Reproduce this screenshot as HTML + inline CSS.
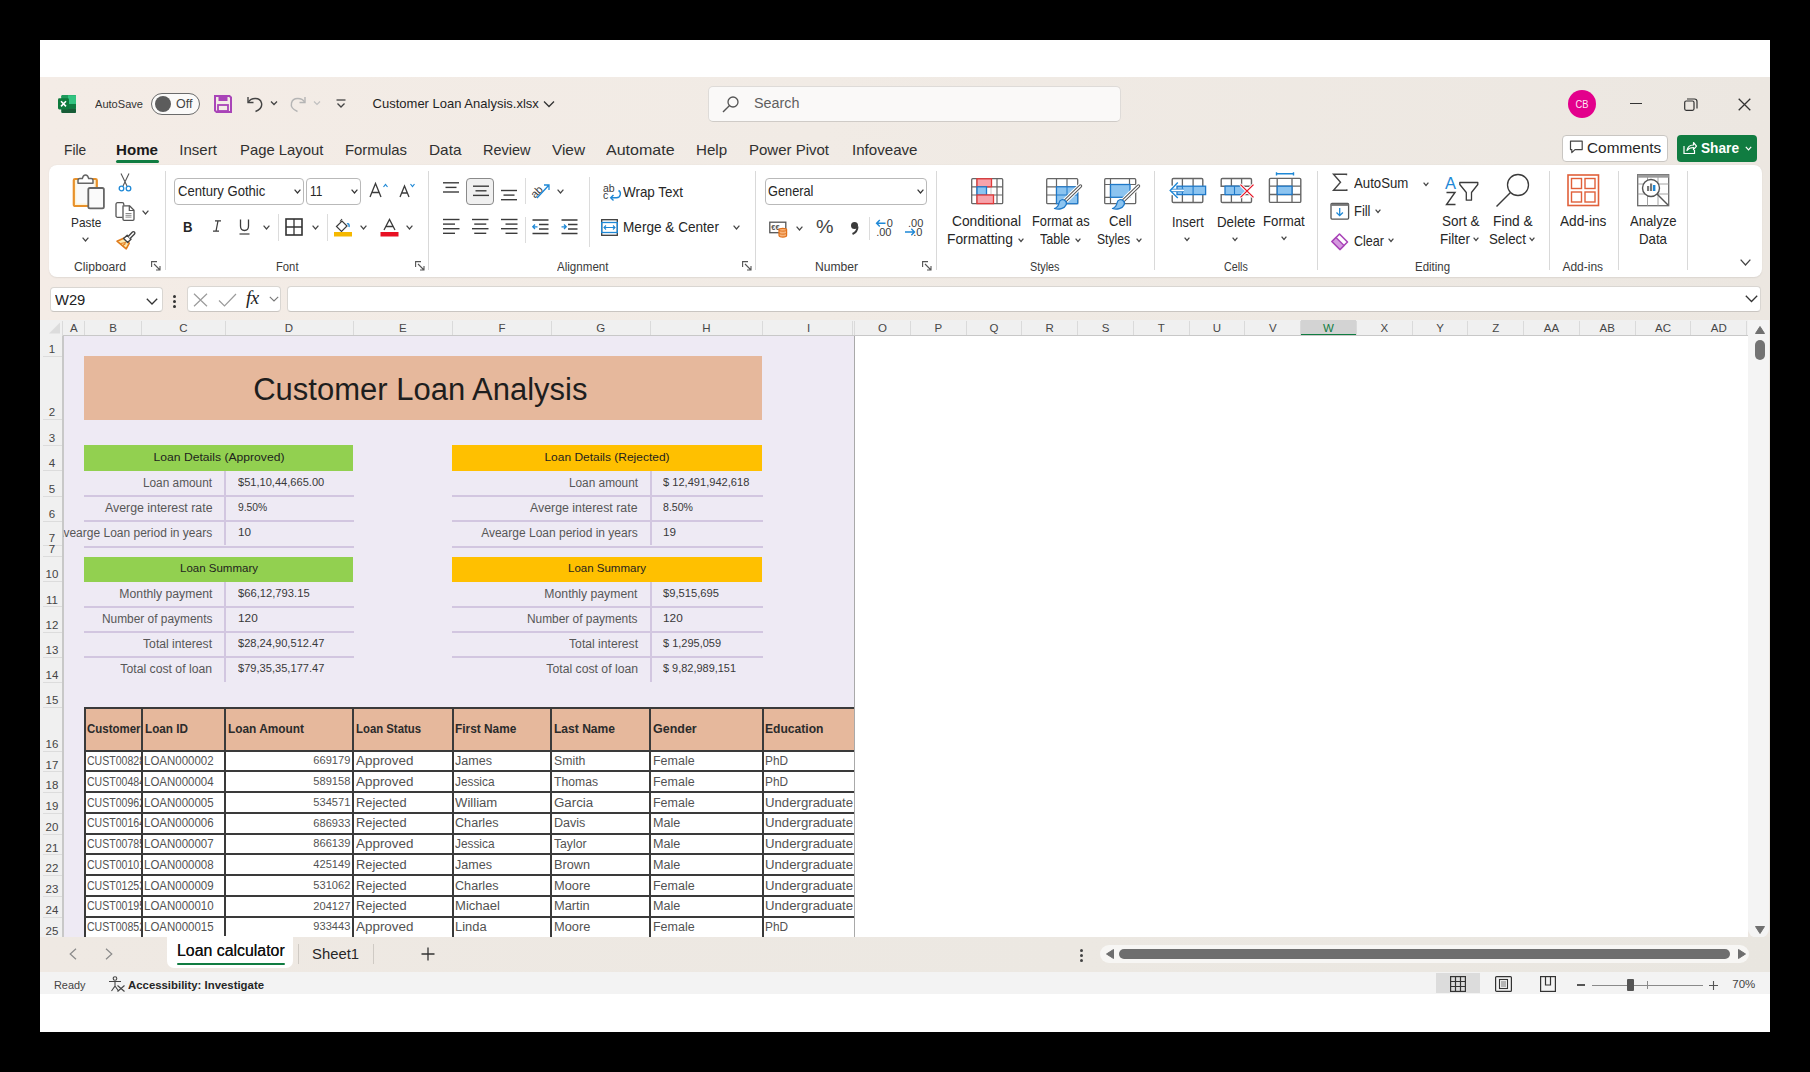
<!DOCTYPE html><html><head><meta charset='utf-8'><title>Excel</title><style>
*{margin:0;padding:0;box-sizing:border-box}
html,body{width:1810px;height:1072px;overflow:hidden;background:#000;font-family:"Liberation Sans",sans-serif}
.a{position:absolute}
.t{position:absolute;white-space:nowrap;line-height:1;font-family:"Liberation Sans",sans-serif}
svg{overflow:visible}
</style></head><body><div class="a" style="left:40.00px;top:40.00px;width:1730.00px;height:992.00px;background:#ffffff;"></div>
<div class="a" style="left:40px;top:77px;width:1730px;height:895px;background:linear-gradient(90deg,#f4ece6 0%,#f1ebe5 45%,#ece7e1 100%)"></div>
<svg class="a" style="left:58px;top:94.8px;" width="19" height="18.2" viewBox="0 0 19 18.2">
      <rect x="3.4" y="0" width="14.6" height="18" rx="1.3" fill="#21a366"/>
      <rect x="3.4" y="0" width="14.6" height="4.5" rx="1.3" fill="#1f9a5c"/>
      <rect x="10" y="0.3" width="8" height="8.7" fill="#33c481"/>
      <rect x="3.4" y="9" width="14.6" height="4.5" fill="#107c41"/>
      <rect x="3.4" y="13.5" width="14.6" height="4.5" rx="1.3" fill="#185c37"/>
      <rect x="0" y="3.2" width="11" height="11.2" rx="1.3" fill="#0e7a3c"/>
      <path d="M3 6.3 L8 11.4 M8 6.3 L3 11.4" stroke="#fff" stroke-width="1.6"/>
    </svg>
<div class="t" style="top:98.65px;font-size:11.50px;color:#333;left:95.00px;transform:scaleX(0.9626);transform-origin:left top;">AutoSave</div>
<div class="a" style="left:150.50px;top:92.50px;width:49.50px;height:22.00px;border:1.3px solid #6b6b6b;border-radius:11px;background:#fbfaf9"></div>
<div class="a" style="left:155px;top:95.5px;width:16px;height:16px;border-radius:50%;background:#5c5c5c"></div>
<div class="t" style="top:97.59px;font-size:12.00px;color:#444;left:176.00px;transform:scaleX(1.0390);transform-origin:left top;">Off</div>
<svg class="a" style="left:214px;top:95px;" width="18" height="18" viewBox="0 0 18 18">
      <path d="M1 1 H15.5 L17 2.5 V17 H2.5 L1 15.5 Z" fill="none" stroke="#a944b8" stroke-width="2"/>
      <rect x="4.5" y="1" width="9" height="5" fill="#a944b8"/>
      <rect x="4" y="10" width="10" height="6" fill="none" stroke="#a944b8" stroke-width="1.8"/>
    </svg>
<svg class="a" style="left:246px;top:94px;" width="18" height="18" viewBox="0 0 18 18"><path d="M2 3 V8.5 H7.5" fill="none" stroke="#444" stroke-width="1.4"/>
      <path d="M2.5 8 C5 3.5 14 3 15.5 9 C16.5 13 13 16 9.5 17.5" fill="none" stroke="#444" stroke-width="1.4"/></svg>
<svg class="a" style="left:270px;top:100px;" width="8" height="6" viewBox="0 0 8 6"><path d="M1 1.5 L4 4.5 L7 1.5" fill="none" stroke="#444" stroke-width="1.3"/></svg>
<svg class="a" style="left:289px;top:94px;" width="18" height="18" viewBox="0 0 18 18"><path d="M16 3 V8.5 H10.5" fill="none" stroke="#b5b5b5" stroke-width="1.4"/>
      <path d="M15.5 8 C13 3.5 4 3 2.5 9 C1.5 13 5 16 8.5 17.5" fill="none" stroke="#b5b5b5" stroke-width="1.4"/></svg>
<svg class="a" style="left:313px;top:100px;" width="8" height="6" viewBox="0 0 8 6"><path d="M1 1.5 L4 4.5 L7 1.5" fill="none" stroke="#c0c0c0" stroke-width="1.2"/></svg>
<svg class="a" style="left:336px;top:99px;" width="10" height="10" viewBox="0 0 10 10"><path d="M0.5 1 H9.5" stroke="#444" stroke-width="1.3"/><path d="M1.5 4.5 L5 8 L8.5 4.5" fill="none" stroke="#444" stroke-width="1.3"/></svg>
<div class="t" style="top:97.47px;font-size:13.00px;color:#1f1f1f;left:372.60px;">Customer Loan Analysis.xlsx</div>
<svg class="a" style="left:543px;top:100px;" width="12" height="8" viewBox="0 0 12 8"><path d="M1 1.5 L6 6.5 L11 1.5" fill="none" stroke="#333" stroke-width="1.3"/></svg>
<div class="a" style="left:707.50px;top:86.00px;width:413.50px;height:35.80px;background:#faf9f8;border:1px solid #dedbd8;border-bottom-color:#cfcbc7;border-radius:5px"></div>
<svg class="a" style="left:722px;top:96px;" width="17" height="17" viewBox="0 0 17 17"><circle cx="11" cy="6" r="5" fill="none" stroke="#555" stroke-width="1.3"/><path d="M7.3 9.8 L1 16" stroke="#555" stroke-width="1.4"/></svg>
<div class="t" style="top:95.86px;font-size:14.00px;color:#5f5f5f;left:753.80px;transform:scaleX(1.0258);transform-origin:left top;">Search</div>
<div class="a" style="left:1567.5px;top:89.5px;width:28px;height:28px;border-radius:50%;background:#e3008c"></div>
<div class="t" style="top:99.21px;font-size:11.00px;color:#ffe6f4;left:1181.50px;width:800px;text-align:center;transform:scaleX(0.8507);transform-origin:center top;">CB</div>
<div class="a" style="left:1629.60px;top:102.60px;width:12.20px;height:1.20px;background:#333;"></div>
<svg class="a" style="left:1683.5px;top:97.5px;" width="14" height="13" viewBox="0 0 14 13"><rect x="0.7" y="3" width="9.3" height="9.3" rx="1.5" fill="none" stroke="#333" stroke-width="1.2"/><path d="M3 1 H10.5 C12 1 13 2 13 3.5 V10.5" fill="none" stroke="#333" stroke-width="1.2"/></svg>
<svg class="a" style="left:1737.5px;top:98px;" width="13" height="13" viewBox="0 0 13 13"><path d="M0.7 0.7 L12.3 12.3 M12.3 0.7 L0.7 12.3" stroke="#333" stroke-width="1.3"/></svg>
<div class="t" style="top:141.74px;font-size:15.00px;color:#303030;left:64.40px;transform:scaleX(0.9144);transform-origin:left top;">File</div>
<div class="t" style="top:141.74px;font-size:15.00px;color:#1a1a1a;font-weight:700;left:116.00px;transform:scaleX(1.0078);transform-origin:left top;">Home</div>
<div class="t" style="top:141.74px;font-size:15.00px;color:#303030;left:179.30px;">Insert</div>
<div class="t" style="top:141.74px;font-size:15.00px;color:#303030;left:239.60px;transform:scaleX(0.9901);transform-origin:left top;">Page Layout</div>
<div class="t" style="top:141.74px;font-size:15.00px;color:#303030;left:345.00px;transform:scaleX(0.9919);transform-origin:left top;">Formulas</div>
<div class="t" style="top:141.74px;font-size:15.00px;color:#303030;left:428.50px;transform:scaleX(1.0258);transform-origin:left top;">Data</div>
<div class="t" style="top:141.74px;font-size:15.00px;color:#303030;left:482.50px;transform:scaleX(0.9658);transform-origin:left top;">Review</div>
<div class="t" style="top:141.74px;font-size:15.00px;color:#303030;left:552.00px;transform:scaleX(1.0236);transform-origin:left top;">View</div>
<div class="t" style="top:141.74px;font-size:15.00px;color:#303030;left:606.00px;transform:scaleX(1.0685);transform-origin:left top;">Automate</div>
<div class="t" style="top:141.74px;font-size:15.00px;color:#303030;left:695.50px;transform:scaleX(1.0082);transform-origin:left top;">Help</div>
<div class="t" style="top:141.74px;font-size:15.00px;color:#303030;left:749.00px;">Power Pivot</div>
<div class="t" style="top:141.74px;font-size:15.00px;color:#303030;left:852.00px;transform:scaleX(1.0071);transform-origin:left top;">Infoveave</div>
<div class="a" style="left:116.00px;top:159.80px;width:42.50px;height:2.80px;background:#107c41;border-radius:2px"></div>
<div class="a" style="left:1562.40px;top:134.50px;width:105.40px;height:27.10px;background:#ffffff;border:1px solid #c9c6c2;border-radius:4px"></div>
<svg class="a" style="left:1569px;top:140px;" width="15" height="14" viewBox="0 0 15 14"><path d="M1.5 1.2 H13.2 V9.6 H6 L2.8 12.6 V9.6 H1.5 Z" fill="none" stroke="#444" stroke-width="1.2" stroke-linejoin="round"/></svg>
<div class="t" style="top:139.74px;font-size:15.00px;color:#262626;left:1586.70px;transform:scaleX(1.0246);transform-origin:left top;">Comments</div>
<div class="a" style="left:1677.20px;top:134.50px;width:80.20px;height:27.10px;background:#107c41;border-radius:4px"></div>
<svg class="a" style="left:1682px;top:140px;" width="15" height="15" viewBox="0 0 15 15"><path d="M2 6 V13.5 H12.5 V10" fill="none" stroke="#fff" stroke-width="1.2"/><path d="M5 10.5 C5.5 7 8 5 11.5 5 V2.5 L14.5 6.2 L11.5 9.7 V7.5 C9 7.5 6.5 8.5 5 10.5 Z" fill="none" stroke="#fff" stroke-width="1.2" stroke-linejoin="round"/></svg>
<div class="t" style="top:139.74px;font-size:15.00px;color:#ffffff;font-weight:700;left:1700.50px;transform:scaleX(0.9115);transform-origin:left top;">Share</div>
<svg class="a" style="left:1745px;top:146px;" width="7" height="5" viewBox="0 0 7 5"><path d="M0.8 0.8 L3.5 3.8 L6.2 0.8" fill="none" stroke="#fff" stroke-width="1.2"/></svg>
<div class="a" style="left:48.70px;top:165.00px;width:1713.30px;height:112.00px;background:#ffffff;border-radius:8px;box-shadow:0 0.5px 1.5px rgba(0,0,0,0.08)"></div>
<div class="a" style="left:164.60px;top:171.00px;width:1.00px;height:99.00px;background:#d9d9d9;"></div>
<div class="a" style="left:427.60px;top:171.00px;width:1.00px;height:99.00px;background:#d9d9d9;"></div>
<div class="a" style="left:754.60px;top:171.00px;width:1.00px;height:99.00px;background:#d9d9d9;"></div>
<div class="a" style="left:935.70px;top:171.00px;width:1.00px;height:99.00px;background:#d9d9d9;"></div>
<div class="a" style="left:1154.40px;top:171.00px;width:1.00px;height:99.00px;background:#d9d9d9;"></div>
<div class="a" style="left:1316.50px;top:171.00px;width:1.00px;height:99.00px;background:#d9d9d9;"></div>
<div class="a" style="left:1548.50px;top:171.00px;width:1.00px;height:99.00px;background:#d9d9d9;"></div>
<div class="a" style="left:1618.00px;top:171.00px;width:1.00px;height:99.00px;background:#d9d9d9;"></div>
<div class="a" style="left:1687.40px;top:171.00px;width:1.00px;height:99.00px;background:#d9d9d9;"></div>
<svg class="a" style="left:72px;top:174px;" width="34" height="36" viewBox="0 0 34 36">
      <rect x="1.8" y="5" width="23" height="27" rx="1.3" fill="#fef3d6" stroke="#e8912a" stroke-width="2.2"/>
      <rect x="4.3" y="8" width="17.8" height="21.5" fill="#fafafa"/>
      <path d="M6 9.3 V6.5 C6 5.3 6.8 4.6 8 4.6 H10.3 C10.8 2.2 11.9 0.9 13.5 0.9 C15.1 0.9 16.2 2.2 16.7 4.6 H19 C20.2 4.6 21 5.3 21 6.5 V9.3 Z" fill="#fff" stroke="#666" stroke-width="1.5" stroke-linejoin="round"/>
      <rect x="16.3" y="14" width="15.6" height="20.4" rx="1.6" fill="#fafafa" stroke="#666" stroke-width="1.8"/>
    </svg>
<div class="t" style="top:215.97px;font-size:13.00px;color:#2b2b2b;left:71.00px;transform:scaleX(0.9115);transform-origin:left top;">Paste</div>
<svg class="a" style="left:82px;top:237px;" width="7" height="5" viewBox="0 0 7 5"><path d="M0.6 0.6 L3.5 4 L6.4 0.6" fill="none" stroke="#444" stroke-width="1.2"/></svg>
<svg class="a" style="left:118px;top:173px;" width="14" height="19" viewBox="0 0 14 19"><path d="M3 0.5 L9 13 M11 0.5 L5 13" stroke="#555" stroke-width="1.1"/>
      <circle cx="3.5" cy="15.5" r="2.3" fill="none" stroke="#1e88d6" stroke-width="1.3"/><circle cx="10.5" cy="15.5" r="2.3" fill="none" stroke="#1e88d6" stroke-width="1.3"/></svg>
<svg class="a" style="left:115px;top:202px;" width="20" height="19" viewBox="0 0 20 19"><path d="M7.5 15.3 H2.6 C1.6 15.3 1 14.7 1 13.7 V2.3 C1 1.3 1.6 0.7 2.6 0.7 H7.2 C8.2 0.7 8.8 1.3 8.8 2.3 V3.5" fill="none" stroke="#555" stroke-width="1.3"/>
      <path d="M8 3.8 H14.5 L19 8.3 V17.2 C19 17.9 18.5 18.3 17.9 18.3 H9.1 C8.4 18.3 8 17.9 8 17.2 Z" fill="#fff" stroke="#555" stroke-width="1.3" stroke-linejoin="round"/>
      <path d="M14.3 3.8 V8.5 H19" fill="none" stroke="#555" stroke-width="1.2"/><path d="M10.5 11.5 H16.5 M10.5 13.3 H16.5 M10.5 15.1 H16.5" stroke="#8a8a8a" stroke-width="1"/></svg>
<svg class="a" style="left:142.4px;top:209.5px;" width="7" height="5" viewBox="0 0 7 5"><path d="M0.6 0.6 L3.5 4 L6.4 0.6" fill="none" stroke="#444" stroke-width="1.2"/></svg>
<svg class="a" style="left:116px;top:230px;" width="19" height="19" viewBox="0 0 19 19"><path d="M1 11.2 L8.2 8 L13.3 13.2 L10.2 18.8 Z" fill="#fde9b0" stroke="#e07b1a" stroke-width="1.6" stroke-linejoin="round"/>
      <path d="M4.5 13.5 L10 12.5 M6.5 15.8 L9.5 13.5" stroke="#e07b1a" stroke-width="1.1"/>
      <path d="M7.6 8.6 L11.2 5.3 L15 9.3 L11.6 12.6 Z" fill="#fff" stroke="#444" stroke-width="1.4" stroke-linejoin="round"/>
      <path d="M12.2 6.4 L16.2 2.2 C16.9 1.5 17.8 1.5 18.4 2.1 C19 2.7 19 3.6 18.3 4.3 L14.1 8.4" fill="#fff" stroke="#444" stroke-width="1.4" stroke-linejoin="round"/></svg>
<div class="t" style="top:260.59px;font-size:12.00px;color:#3a3a3a;left:73.60px;transform:scaleX(1.0125);transform-origin:left top;">Clipboard</div>
<svg class="a" style="left:151px;top:261px;" width="10" height="10" viewBox="0 0 10 10"><path d="M0.6 6 V0.6 H6" fill="none" stroke="#555" stroke-width="1.1"/><path d="M3 3 L9 9 M5 9 H9 V5" fill="none" stroke="#555" stroke-width="1.1"/></svg>
<div class="a" style="left:174.20px;top:177.70px;width:129.40px;height:27.30px;background:#fff;border:1px solid #b9b9b9;border-radius:4px"></div>
<div class="t" style="top:184.33px;font-size:14.20px;color:#262626;left:177.50px;transform:scaleX(0.9229);transform-origin:left top;">Century Gothic</div>
<svg class="a" style="left:294px;top:189px;" width="7" height="5" viewBox="0 0 7 5"><path d="M0.6 0.6 L3.5 4 L6.4 0.6" fill="none" stroke="#333" stroke-width="1.2"/></svg>
<div class="a" style="left:306.20px;top:177.70px;width:55.20px;height:27.30px;background:#fff;border:1px solid #b9b9b9;border-radius:4px"></div>
<div class="t" style="top:184.33px;font-size:14.20px;color:#262626;left:309.50px;transform:scaleX(0.8413);transform-origin:left top;">11</div>
<svg class="a" style="left:350.5px;top:189px;" width="7" height="5" viewBox="0 0 7 5"><path d="M0.6 0.6 L3.5 4 L6.4 0.6" fill="none" stroke="#333" stroke-width="1.2"/></svg>
<svg class="a" style="left:369px;top:182px;" width="19" height="16" viewBox="0 0 19 16"><path d="M1 15 L6.5 1.5 L12 15 M3 10.5 H10" fill="none" stroke="#3b3b3b" stroke-width="1.3"/><path d="M14.5 5 L16.5 2.5 L18.5 5" fill="none" stroke="#1e88d6" stroke-width="1.2"/></svg>
<svg class="a" style="left:399px;top:183px;" width="17" height="15" viewBox="0 0 17 15"><path d="M1 14 L5.5 3 L10 14 M2.7 10 H8.3" fill="none" stroke="#3b3b3b" stroke-width="1.3"/><path d="M11.5 1 L13.5 3.5 L15.5 1" fill="none" stroke="#1e88d6" stroke-width="1.2"/></svg>
<div class="t" style="top:218.74px;font-size:15.00px;color:#262626;font-weight:700;left:183.00px;transform:scaleX(0.8770);transform-origin:left top;">B</div>
<svg class="a" style="left:212px;top:220px;" width="10" height="12" viewBox="0 0 10 12"><path d="M3 0.8 H9 M1 11.2 H7 M6 0.8 L4 11.2" fill="none" stroke="#3b3b3b" stroke-width="1.2"/></svg>
<svg class="a" style="left:239px;top:219px;" width="11" height="16" viewBox="0 0 11 16"><path d="M1.5 0.5 V7 C1.5 13 9.5 13 9.5 7 V0.5" fill="none" stroke="#3b3b3b" stroke-width="1.3"/><path d="M0.5 15 H10.5" stroke="#3b3b3b" stroke-width="1.2"/></svg>
<svg class="a" style="left:263px;top:225px;" width="7" height="5" viewBox="0 0 7 5"><path d="M0.6 0.6 L3.5 4 L6.4 0.6" fill="none" stroke="#444" stroke-width="1.2"/></svg>
<div class="a" style="left:278.00px;top:214.00px;width:1.00px;height:27.00px;background:#dcdcdc;"></div>
<svg class="a" style="left:285px;top:218px;" width="18" height="18" viewBox="0 0 18 18"><rect x="1" y="1" width="16" height="16" fill="none" stroke="#333" stroke-width="1.6"/><path d="M9 1 V17 M1 9 H17" stroke="#333" stroke-width="1.3"/></svg>
<svg class="a" style="left:312px;top:225px;" width="7" height="5" viewBox="0 0 7 5"><path d="M0.6 0.6 L3.5 4 L6.4 0.6" fill="none" stroke="#444" stroke-width="1.2"/></svg>
<div class="a" style="left:327.00px;top:214.00px;width:1.00px;height:27.00px;background:#dcdcdc;"></div>
<svg class="a" style="left:334px;top:218px;" width="19" height="19" viewBox="0 0 19 19"><path d="M2.5 8.5 L8 3 L13 8 L7.5 13.5 Z" fill="none" stroke="#3b3b3b" stroke-width="1.2"/><path d="M6 3.5 L8 1" stroke="#3b3b3b" stroke-width="1.1"/><path d="M13 6 C14.5 5 15.5 6.5 15 9" fill="none" stroke="#1e88d6" stroke-width="1.4"/><rect x="0" y="14" width="18" height="4.5" fill="#f5b800"/></svg>
<svg class="a" style="left:360px;top:225px;" width="7" height="5" viewBox="0 0 7 5"><path d="M0.6 0.6 L3.5 4 L6.4 0.6" fill="none" stroke="#444" stroke-width="1.2"/></svg>
<svg class="a" style="left:379.5px;top:218px;" width="19" height="19" viewBox="0 0 19 19"><path d="M4 12 L9.5 1.5 L15 12 M6 8.5 H13" fill="none" stroke="#3b3b3b" stroke-width="1.3"/><rect x="0.5" y="14" width="18" height="4.5" fill="#e81123"/></svg>
<svg class="a" style="left:406px;top:225px;" width="7" height="5" viewBox="0 0 7 5"><path d="M0.6 0.6 L3.5 4 L6.4 0.6" fill="none" stroke="#444" stroke-width="1.2"/></svg>
<div class="t" style="top:260.59px;font-size:12.00px;color:#3a3a3a;left:276.00px;transform:scaleX(0.9371);transform-origin:left top;">Font</div>
<svg class="a" style="left:414.5px;top:261px;" width="10" height="10" viewBox="0 0 10 10"><path d="M0.6 6 V0.6 H6" fill="none" stroke="#555" stroke-width="1.1"/><path d="M3 3 L9 9 M5 9 H9 V5" fill="none" stroke="#555" stroke-width="1.1"/></svg>
<svg class="a" style="left:443px;top:0px;" width="17" height="300" viewBox="0 0 17 300"><path d="M0.0 182.8 H16.0" stroke="#3b3b3b" stroke-width="1.4"/><path d="M2.5 187.4 H13.5" stroke="#3b3b3b" stroke-width="1.4"/><path d="M0.0 192.0 H16.0" stroke="#3b3b3b" stroke-width="1.4"/></svg>
<div class="a" style="left:466.30px;top:177.80px;width:27.30px;height:27.00px;background:#f0f0f0;border:1px solid #8a8a8a;border-radius:4px"></div>
<svg class="a" style="left:472.5px;top:0px;" width="17" height="300" viewBox="0 0 17 300"><path d="M0.0 186.2 H16.0" stroke="#3b3b3b" stroke-width="1.4"/><path d="M2.5 190.79999999999998 H13.5" stroke="#3b3b3b" stroke-width="1.4"/><path d="M0.0 195.39999999999998 H16.0" stroke="#3b3b3b" stroke-width="1.4"/></svg>
<svg class="a" style="left:501px;top:0px;" width="17" height="300" viewBox="0 0 17 300"><path d="M0.0 190.5 H16.0" stroke="#3b3b3b" stroke-width="1.4"/><path d="M2.5 195.1 H13.5" stroke="#3b3b3b" stroke-width="1.4"/><path d="M0.0 199.7 H16.0" stroke="#3b3b3b" stroke-width="1.4"/></svg>
<div class="a" style="left:524.50px;top:178.00px;width:1.00px;height:26.00px;background:#dcdcdc;"></div>
<svg class="a" style="left:531px;top:182px;" width="20" height="18" viewBox="0 0 20 18"><text x="-1" y="13" font-size="11" fill="#3b3b3b" transform="rotate(-45 6 9)" font-family="Liberation Sans">ab</text><path d="M6 16 L18 3 M13 3 H18 V8" fill="none" stroke="#1e88d6" stroke-width="1.3"/></svg>
<svg class="a" style="left:556.5px;top:189px;" width="7" height="5" viewBox="0 0 7 5"><path d="M0.6 0.6 L3.5 4 L6.4 0.6" fill="none" stroke="#444" stroke-width="1.2"/></svg>
<svg class="a" style="left:443px;top:0px;" width="17" height="300" viewBox="0 0 17 300"><path d="M0 219.5 H16.5" stroke="#3b3b3b" stroke-width="1.4"/><path d="M0 224.1 H12" stroke="#3b3b3b" stroke-width="1.4"/><path d="M0 228.7 H16.5" stroke="#3b3b3b" stroke-width="1.4"/><path d="M0 233.3 H12" stroke="#3b3b3b" stroke-width="1.4"/></svg>
<svg class="a" style="left:472px;top:0px;" width="17" height="300" viewBox="0 0 17 300"><path d="M0.0 219.5 H16.5" stroke="#3b3b3b" stroke-width="1.4"/><path d="M2.25 224.1 H14.25" stroke="#3b3b3b" stroke-width="1.4"/><path d="M0.0 228.7 H16.5" stroke="#3b3b3b" stroke-width="1.4"/><path d="M2.25 233.3 H14.25" stroke="#3b3b3b" stroke-width="1.4"/></svg>
<svg class="a" style="left:501px;top:0px;" width="17" height="300" viewBox="0 0 17 300"><path d="M0.0 219.5 H16.5" stroke="#3b3b3b" stroke-width="1.4"/><path d="M4.5 224.1 H16.5" stroke="#3b3b3b" stroke-width="1.4"/><path d="M0.0 228.7 H16.5" stroke="#3b3b3b" stroke-width="1.4"/><path d="M4.5 233.3 H16.5" stroke="#3b3b3b" stroke-width="1.4"/></svg>
<div class="a" style="left:524.50px;top:217.00px;width:1.00px;height:26.00px;background:#dcdcdc;"></div>
<svg class="a" style="left:532px;top:219px;" width="17" height="17" viewBox="0 0 17 17"><path d="M0.5 1 H16.5 M7 5.5 H16.5 M7 10 H16.5 M0.5 14.5 H16.5" stroke="#3b3b3b" stroke-width="1.4"/><path d="M5.5 7.8 H0.8 M3 5.5 L0.8 7.8 L3 10" fill="none" stroke="#1e88d6" stroke-width="1.3"/></svg>
<svg class="a" style="left:561px;top:219px;" width="17" height="17" viewBox="0 0 17 17"><path d="M0.5 1 H16.5 M7 5.5 H16.5 M7 10 H16.5 M0.5 14.5 H16.5" stroke="#3b3b3b" stroke-width="1.4"/><path d="M0.5 7.8 H5.2 M3 5.5 L5.2 7.8 L3 10" fill="none" stroke="#1e88d6" stroke-width="1.3"/></svg>
<div class="a" style="left:589.30px;top:177.00px;width:1.00px;height:70.00px;background:#dcdcdc;"></div>
<svg class="a" style="left:602px;top:182px;" width="20" height="18" viewBox="0 0 20 18"><text x="1" y="9.6" font-size="10.5" fill="#3b3b3b" font-family="Liberation Sans">ab</text><text x="1" y="16.8" font-size="10.5" fill="#3b3b3b" font-family="Liberation Sans">c</text><path d="M16.5 8.5 C19.5 10 19 15.5 14.5 15.8 H9" fill="none" stroke="#1e88d6" stroke-width="1.4"/><path d="M11.5 13 L8.7 15.8 L11.5 18.5" fill="none" stroke="#1e88d6" stroke-width="1.4"/></svg>
<div class="t" style="top:184.83px;font-size:14.20px;color:#262626;left:623.00px;transform:scaleX(0.9464);transform-origin:left top;">Wrap Text</div>
<svg class="a" style="left:600.5px;top:218.5px;" width="17" height="17" viewBox="0 0 17 17"><rect x="0.7" y="0.7" width="15.6" height="15.6" fill="none" stroke="#3b3b3b" stroke-width="1.3"/><path d="M0.7 3.5 H16.3 M0.7 13.5 H16.3" stroke="#3b3b3b" stroke-width="1"/><rect x="0.7" y="3.5" width="15.6" height="10" fill="none" stroke="#1e88d6" stroke-width="1.3"/><path d="M3 8.5 H14 M5 6.5 L3 8.5 L5 10.5 M12 6.5 L14 8.5 L12 10.5" fill="none" stroke="#1e88d6" stroke-width="1.1"/></svg>
<div class="t" style="top:220.33px;font-size:14.20px;color:#262626;left:623.00px;transform:scaleX(0.9578);transform-origin:left top;">Merge &amp; Center</div>
<svg class="a" style="left:733px;top:225px;" width="7" height="5" viewBox="0 0 7 5"><path d="M0.6 0.6 L3.5 4 L6.4 0.6" fill="none" stroke="#444" stroke-width="1.2"/></svg>
<div class="t" style="top:260.59px;font-size:12.00px;color:#3a3a3a;left:556.50px;transform:scaleX(0.9652);transform-origin:left top;">Alignment</div>
<svg class="a" style="left:742.4px;top:261px;" width="10" height="10" viewBox="0 0 10 10"><path d="M0.6 6 V0.6 H6" fill="none" stroke="#555" stroke-width="1.1"/><path d="M3 3 L9 9 M5 9 H9 V5" fill="none" stroke="#555" stroke-width="1.1"/></svg>
<div class="a" style="left:764.70px;top:177.50px;width:162.00px;height:27.80px;background:#fff;border:1px solid #b9b9b9;border-radius:4px"></div>
<div class="t" style="top:184.33px;font-size:14.20px;color:#262626;left:768.00px;transform:scaleX(0.9007);transform-origin:left top;">General</div>
<svg class="a" style="left:917px;top:189px;" width="7" height="5" viewBox="0 0 7 5"><path d="M0.6 0.6 L3.5 4 L6.4 0.6" fill="none" stroke="#333" stroke-width="1.2"/></svg>
<svg class="a" style="left:769px;top:221px;" width="19" height="17" viewBox="0 0 19 17"><rect x="0.8" y="1.2" width="16" height="10.5" fill="#fff" stroke="#555" stroke-width="1.3"/><text x="2.3" y="9.3" font-size="7.5" fill="#555" font-family="Liberation Sans" font-weight="700">€€</text><path d="M10 8.8 C10 7 17.6 7 17.6 8.8 V14.6 C17.6 16.6 10 16.6 10 14.6 Z" fill="#f7b37a" stroke="#e0701a" stroke-width="1.2"/><path d="M10 8.8 C10 10.6 17.6 10.6 17.6 8.8 M10 11.8 C10 13.6 17.6 13.6 17.6 11.8" fill="none" stroke="#e0701a" stroke-width="1"/></svg>
<svg class="a" style="left:796.4px;top:226px;" width="7" height="5" viewBox="0 0 7 5"><path d="M0.6 0.6 L3.5 4 L6.4 0.6" fill="none" stroke="#444" stroke-width="1.2"/></svg>
<div class="t" style="top:217.27px;font-size:19.00px;color:#444;left:815.50px;transform:scaleX(1.0358);transform-origin:left top;">%</div>
<div class="t" style="top:217.99px;font-size:0.10px;color:#333;left:849.00px;">❟</div>
<svg class="a" style="left:849.7px;top:220px;" width="9" height="15" viewBox="0 0 9 15"><circle cx="4.5" cy="5.5" r="3.5" fill="#3b3b3b"/><path d="M7.5 6.5 C7.5 10 6 12.5 2.5 14" fill="none" stroke="#3b3b3b" stroke-width="2"/></svg>
<div class="a" style="left:869.00px;top:217.00px;width:1.00px;height:23.00px;background:#dcdcdc;"></div>
<svg class="a" style="left:875px;top:218px;" width="20" height="19" viewBox="0 0 20 19"><path d="M1.6 5.2 H10.5 M4.8 2 L1.6 5.2 L4.8 8.4" fill="none" stroke="#1e88d6" stroke-width="1.4"/><text x="11.8" y="9.2" font-size="11" fill="#3b3b3b" font-family="Liberation Sans">0</text><text x="1.2" y="18.2" font-size="11" fill="#3b3b3b" font-family="Liberation Sans">.00</text></svg>
<svg class="a" style="left:903.5px;top:218px;" width="21" height="19" viewBox="0 0 21 19"><text x="4" y="9.2" font-size="11" fill="#3b3b3b" font-family="Liberation Sans">.00</text><path d="M1 14 H10.5 M7.3 10.8 L10.5 14 L7.3 17.2" fill="none" stroke="#1e88d6" stroke-width="1.4"/><text x="9.3" y="18.2" font-size="11" fill="#3b3b3b" font-family="Liberation Sans">.0</text></svg>
<div class="t" style="top:260.59px;font-size:12.00px;color:#3a3a3a;left:814.50px;transform:scaleX(1.0099);transform-origin:left top;">Number</div>
<svg class="a" style="left:922px;top:261px;" width="10" height="10" viewBox="0 0 10 10"><path d="M0.6 6 V0.6 H6" fill="none" stroke="#555" stroke-width="1.1"/><path d="M3 3 L9 9 M5 9 H9 V5" fill="none" stroke="#555" stroke-width="1.1"/></svg>
<svg class="a" style="left:970.5px;top:177.5px;" width="33" height="27" viewBox="0 0 33 27"><rect x="0.7" y="0.7" width="31" height="25" rx="1" fill="#fff" stroke="#666" stroke-width="1.3"/>
      <path d="M6 0.7 V25.7 M26 0.7 V25.7 M0.7 8.8 H31.7 M0.7 17 H31.7" stroke="#666" stroke-width="1.2"/>
      <path d="M15 9 V17 M20 9 V17" stroke="#c8c8c8" stroke-width="1"/>
      <rect x="6" y="0.8" width="14.5" height="8" fill="#f7a3ab" stroke="#e03a3a" stroke-width="1.3"/>
      <rect x="6" y="8.8" width="9.5" height="8.2" fill="#8cc4f0" stroke="#1e78c8" stroke-width="1.3"/>
      <rect x="6" y="17" width="16.5" height="8.6" fill="#f7a3ab" stroke="#e03a3a" stroke-width="1.3"/></svg>
<div class="t" style="top:213.93px;font-size:14.20px;color:#262626;left:951.60px;transform:scaleX(0.9712);transform-origin:left top;">Conditional</div>
<div class="t" style="top:231.93px;font-size:14.20px;color:#262626;left:947.00px;transform:scaleX(0.9726);transform-origin:left top;">Formatting</div>
<svg class="a" style="left:1018px;top:237.5px;" width="6" height="4.5" viewBox="0 0 6 4.5"><path d="M0.6 0.6 L3.0 3.5 L5.4 0.6" fill="none" stroke="#444" stroke-width="1.2"/></svg>
<svg class="a" style="left:1045.5px;top:177.5px;" width="37" height="32" viewBox="0 0 37 32"><rect x="0.7" y="0.7" width="31" height="25" rx="1" fill="#fff" stroke="#666" stroke-width="1.3"/>
      <path d="M10.5 0.7 V25.7 M21 0.7 V25.7 M0.7 8.8 H31.7 M0.7 17 H31.7" stroke="#666" stroke-width="1.2"/>
      <rect x="10.5" y="8.8" width="21.2" height="16.9" fill="#8cc4f0" stroke="#1e78c8" stroke-width="1.2"/>
      <path d="M21 8.8 V25.7 M10.5 17 H31.7" stroke="#1e78c8" stroke-width="1"/>
      <path d="M34.5 8 L17 25" stroke="#fff" stroke-width="5.5" stroke-linecap="round"/><path d="M34.5 8 L17 25" stroke="#555" stroke-width="3.4" stroke-linecap="round"/><path d="M34.5 8 L17 25" stroke="#fff" stroke-width="1.4" stroke-linecap="round"/>
      <path d="M19.5 23 C17.5 20.5 13.5 21.5 13 25 C12.5 28 11 29.5 8.5 30.5 C13 32 18.5 30.5 20 27 C20.8 25.5 20.5 24 19.5 23 Z" fill="#8cc4f0" stroke="#1e78c8" stroke-width="1.3" stroke-linejoin="round"/></svg>
<div class="t" style="top:213.93px;font-size:14.20px;color:#262626;left:1032.00px;transform:scaleX(0.9028);transform-origin:left top;">Format as</div>
<div class="t" style="top:231.93px;font-size:14.20px;color:#262626;left:1040.00px;transform:scaleX(0.8838);transform-origin:left top;">Table</div>
<svg class="a" style="left:1075px;top:237.5px;" width="6" height="4.5" viewBox="0 0 6 4.5"><path d="M0.6 0.6 L3.0 3.5 L5.4 0.6" fill="none" stroke="#444" stroke-width="1.2"/></svg>
<svg class="a" style="left:1104px;top:177.5px;" width="37" height="32" viewBox="0 0 37 32"><rect x="0.7" y="0.7" width="31" height="25" rx="1" fill="#fff" stroke="#666" stroke-width="1.3"/>
      <path d="M6.5 0.7 V25.7 M0.7 6.5 H6.5 M0.7 19.3 H6.5 M25.5 0.7 V6.5 H31.7" fill="none" stroke="#666" stroke-width="1.2"/>
      <rect x="6.5" y="6.5" width="19.5" height="12.8" fill="#8cc4f0" stroke="#1e78c8" stroke-width="1.3"/>
      <path d="M34.5 8 L17 25" stroke="#fff" stroke-width="5.5" stroke-linecap="round"/><path d="M34.5 8 L17 25" stroke="#555" stroke-width="3.4" stroke-linecap="round"/><path d="M34.5 8 L17 25" stroke="#fff" stroke-width="1.4" stroke-linecap="round"/>
      <path d="M19.5 23 C17.5 20.5 13.5 21.5 13 25 C12.5 28 11 29.5 8.5 30.5 C13 32 18.5 30.5 20 27 C20.8 25.5 20.5 24 19.5 23 Z" fill="#8cc4f0" stroke="#1e78c8" stroke-width="1.3" stroke-linejoin="round"/></svg>
<div class="t" style="top:213.93px;font-size:14.20px;color:#262626;left:1109.00px;transform:scaleX(0.9239);transform-origin:left top;">Cell</div>
<div class="t" style="top:231.93px;font-size:14.20px;color:#262626;left:1096.50px;transform:scaleX(0.8534);transform-origin:left top;">Styles</div>
<svg class="a" style="left:1136px;top:237.5px;" width="6" height="4.5" viewBox="0 0 6 4.5"><path d="M0.6 0.6 L3.0 3.5 L5.4 0.6" fill="none" stroke="#444" stroke-width="1.2"/></svg>
<div class="t" style="top:260.59px;font-size:12.00px;color:#3a3a3a;left:1029.70px;transform:scaleX(0.9028);transform-origin:left top;">Styles</div>
<svg class="a" style="left:1169px;top:176px;" width="40" height="30" viewBox="0 0 40 30"><rect x="3.2" y="2.5" width="30.6" height="24" rx="1.2" fill="#fff" stroke="#666" stroke-width="1.4"/>
      <path d="M13.4 2.5 V26.5 M24.1 2.5 V26.5" stroke="#666" stroke-width="1.3"/>
      <rect x="0" y="9.6" width="6" height="9.6" fill="#fff"/>
      <rect x="8" y="10.2" width="28.6" height="8.4" fill="#8cc4f0" stroke="#1e78c8" stroke-width="1.3"/>
      <path d="M24.1 10.2 V18.6 M13.4 10.2 V18.6" stroke="#1e78c8" stroke-width="1.1"/>
      <path d="M1.5 14.4 H15" stroke="#fff" stroke-width="3"/><path d="M2 13.2 H15 M2 15.6 H15" stroke="#1e78c8" stroke-width="0.8"/>
      <path d="M8.8 6.5 L1.2 14.4 L8.8 22" fill="none" stroke="#1e88d6" stroke-width="1.4"/></svg>
<div class="t" style="top:214.63px;font-size:14.20px;color:#262626;left:1171.50px;transform:scaleX(0.8927);transform-origin:left top;">Insert</div>
<svg class="a" style="left:1184px;top:236.5px;" width="6" height="4.5" viewBox="0 0 6 4.5"><path d="M0.6 0.6 L3.0 3.5 L5.4 0.6" fill="none" stroke="#444" stroke-width="1.2"/></svg>
<svg class="a" style="left:1218px;top:176px;" width="40" height="30" viewBox="0 0 40 30"><path d="M3.2 10.2 V3.7 C3.2 3 3.7 2.5 4.4 2.5 H32.3 C33 2.5 33.5 3 33.5 3.7 V10.2 Z" fill="#fff" stroke="#666" stroke-width="1.4"/>
      <path d="M3.2 18.6 V25.3 C3.2 26 3.7 26.5 4.4 26.5 H32.3 C33 26.5 33.5 26 33.5 25.3 V18.6 Z" fill="#fff" stroke="#666" stroke-width="1.4"/>
      <path d="M13.4 2.5 V10.2 M23.6 2.5 V10.2 M13.4 18.6 V26.5 M23.6 18.6 V26.5" stroke="#666" stroke-width="1.3"/>
      <path d="M7 10.2 H24.5 L28.5 14.4 L24.5 18.6 H7 Z" fill="#8cc4f0" stroke="#1e78c8" stroke-width="1.3" stroke-linejoin="round"/>
      <path d="M16.5 10.2 V18.6" stroke="#1e78c8" stroke-width="1.1"/>
      <path d="M22.5 8.6 L35.5 21.4 M35.5 8.6 L22.5 21.4" stroke="#fff" stroke-width="3"/>
      <path d="M22.5 8.6 L35.5 21.4 M35.5 8.6 L22.5 21.4" stroke="#e81123" stroke-width="1.3"/></svg>
<div class="t" style="top:214.63px;font-size:14.20px;color:#262626;left:1216.80px;transform:scaleX(0.9380);transform-origin:left top;">Delete</div>
<svg class="a" style="left:1232px;top:236.5px;" width="6" height="4.5" viewBox="0 0 6 4.5"><path d="M0.6 0.6 L3.0 3.5 L5.4 0.6" fill="none" stroke="#444" stroke-width="1.2"/></svg>
<svg class="a" style="left:1267px;top:172px;" width="37" height="33" viewBox="0 0 37 33"><rect x="2.4" y="6.4" width="31.4" height="24" rx="1.2" fill="#fff" stroke="#666" stroke-width="1.4"/>
      <path d="M10.2 6.4 V30.4 M25 6.4 V30.4 M2.4 14.2 H33.8 M2.4 22.5 H33.8" stroke="#666" stroke-width="1.3"/>
      <rect x="10.2" y="14.2" width="14.8" height="8.3" fill="#8cc4f0" stroke="#1e78c8" stroke-width="1.3"/>
      <path d="M9.5 1.8 H26.5 M9.5 0.2 V3.4 M26.5 0.2 V3.4" stroke="#1e88d6" stroke-width="1.4"/></svg>
<div class="t" style="top:213.93px;font-size:14.20px;color:#262626;left:1263.20px;transform:scaleX(0.9296);transform-origin:left top;">Format</div>
<svg class="a" style="left:1281px;top:235.5px;" width="6" height="4.5" viewBox="0 0 6 4.5"><path d="M0.6 0.6 L3.0 3.5 L5.4 0.6" fill="none" stroke="#444" stroke-width="1.2"/></svg>
<div class="t" style="top:260.59px;font-size:12.00px;color:#3a3a3a;left:1223.60px;transform:scaleX(0.8923);transform-origin:left top;">Cells</div>
<svg class="a" style="left:1332px;top:173px;" width="17" height="19" viewBox="0 0 17 19"><path d="M14.5 2.2 V1.3 H1.5 L8.5 9.2 L1.5 17.2 H14.8 V16.3" fill="none" stroke="#444" stroke-width="1.4" stroke-linejoin="miter"/></svg>
<div class="t" style="top:175.83px;font-size:14.20px;color:#262626;left:1353.80px;transform:scaleX(0.9314);transform-origin:left top;">AutoSum</div>
<svg class="a" style="left:1423px;top:181.5px;" width="6" height="4.5" viewBox="0 0 6 4.5"><path d="M0.6 0.6 L3.0 3.5 L5.4 0.6" fill="none" stroke="#444" stroke-width="1.2"/></svg>
<svg class="a" style="left:1330px;top:202px;" width="20" height="18" viewBox="0 0 20 18"><rect x="1" y="1.3" width="17.6" height="15.8" rx="1" fill="#fff" stroke="#555" stroke-width="1.3"/><path d="M1 2.8 H18.6" stroke="#777" stroke-width="2.2"/><path d="M9.7 6 V13.5 M6.5 10.5 L9.7 13.7 L12.9 10.5" fill="none" stroke="#1e88d6" stroke-width="1.3"/></svg>
<div class="t" style="top:204.33px;font-size:14.20px;color:#262626;left:1353.80px;transform:scaleX(0.9097);transform-origin:left top;">Fill</div>
<svg class="a" style="left:1375px;top:208.5px;" width="6" height="4.5" viewBox="0 0 6 4.5"><path d="M0.6 0.6 L3.0 3.5 L5.4 0.6" fill="none" stroke="#444" stroke-width="1.2"/></svg>
<svg class="a" style="left:1331px;top:231px;" width="18" height="18" viewBox="0 0 18 18"><path d="M1 10.5 L8.5 3 L16.5 11 L9 18.5 Z" fill="#fff" stroke="#a944b8" stroke-width="1.6" stroke-linejoin="round"/><path d="M1 10.5 L5 6.5 L13 14.5 L9 18.5 Z" fill="#d59adf" stroke="#a944b8" stroke-width="1.4" stroke-linejoin="round"/></svg>
<div class="t" style="top:233.83px;font-size:14.20px;color:#262626;left:1353.80px;transform:scaleX(0.8841);transform-origin:left top;">Clear</div>
<svg class="a" style="left:1388px;top:238px;" width="6" height="4.5" viewBox="0 0 6 4.5"><path d="M0.6 0.6 L3.0 3.5 L5.4 0.6" fill="none" stroke="#444" stroke-width="1.2"/></svg>
<svg class="a" style="left:1445px;top:175px;" width="35" height="31" viewBox="0 0 35 31"><text x="0" y="14" font-size="16.5" fill="#1e88d6" font-family="Liberation Sans">A</text><path d="M1.5 17.5 H10 L1.5 29.5 H10.5" fill="none" stroke="#3b3b3b" stroke-width="1.4"/><path d="M14.8 7.5 H32.8 V9.5 L26.5 17.5 V25.2 H21.3 V17.5 L14.8 9.5 Z" fill="none" stroke="#3b3b3b" stroke-width="1.3" stroke-linejoin="round"/></svg>
<div class="t" style="top:213.93px;font-size:14.20px;color:#262626;left:1442.00px;transform:scaleX(0.9529);transform-origin:left top;">Sort &amp;</div>
<div class="t" style="top:231.93px;font-size:14.20px;color:#262626;left:1440.00px;transform:scaleX(0.9508);transform-origin:left top;">Filter</div>
<svg class="a" style="left:1473px;top:236.5px;" width="6" height="4.5" viewBox="0 0 6 4.5"><path d="M0.6 0.6 L3.0 3.5 L5.4 0.6" fill="none" stroke="#444" stroke-width="1.2"/></svg>
<svg class="a" style="left:1495px;top:173px;" width="35" height="35" viewBox="0 0 35 35"><circle cx="23" cy="12" r="10.5" fill="none" stroke="#3b3b3b" stroke-width="1.3"/><path d="M15.5 19.5 L1.5 33.5" stroke="#3b3b3b" stroke-width="1.4"/></svg>
<div class="t" style="top:213.93px;font-size:14.20px;color:#262626;left:1493.00px;transform:scaleX(0.9698);transform-origin:left top;">Find &amp;</div>
<div class="t" style="top:231.93px;font-size:14.20px;color:#262626;left:1488.60px;transform:scaleX(0.9375);transform-origin:left top;">Select</div>
<svg class="a" style="left:1529px;top:236.5px;" width="6" height="4.5" viewBox="0 0 6 4.5"><path d="M0.6 0.6 L3.0 3.5 L5.4 0.6" fill="none" stroke="#444" stroke-width="1.2"/></svg>
<div class="t" style="top:260.59px;font-size:12.00px;color:#3a3a3a;left:1415.00px;transform:scaleX(0.9539);transform-origin:left top;">Editing</div>
<svg class="a" style="left:1567px;top:174px;" width="33" height="33" viewBox="0 0 33 33"><rect x="1" y="1" width="30.5" height="30.5" fill="none" stroke="#e0603a" stroke-width="1.6"/><rect x="4.5" y="4.5" width="10" height="10" fill="none" stroke="#e0603a" stroke-width="1.4"/><rect x="18" y="4.5" width="10" height="10" fill="none" stroke="#e0603a" stroke-width="1.4"/><rect x="4.5" y="18" width="10" height="10" fill="none" stroke="#e0603a" stroke-width="1.4"/><rect x="18" y="18" width="10" height="10" fill="none" stroke="#e0603a" stroke-width="1.4"/></svg>
<div class="t" style="top:213.83px;font-size:14.20px;color:#262626;left:1560.20px;transform:scaleX(0.9638);transform-origin:left top;">Add-ins</div>
<div class="t" style="top:260.59px;font-size:12.00px;color:#3a3a3a;left:1562.40px;">Add-ins</div>
<svg class="a" style="left:1636.5px;top:174px;" width="33" height="33" viewBox="0 0 33 33"><rect x="0.7" y="0.7" width="31" height="31" fill="#fff" stroke="#6a6a6a" stroke-width="1.3"/><rect x="0.7" y="0.7" width="31" height="3" fill="#9a9a9a"/>
      <path d="M0.7 10 H31.7 M0.7 20 H31.7 M10.5 3 V31.7 M21 3 V31.7" stroke="#9a9a9a" stroke-width="0.9"/>
      <circle cx="14" cy="14" r="8.5" fill="#fff" stroke="#555" stroke-width="1.4"/><path d="M20 20 L31 31" stroke="#555" stroke-width="1.4"/>
      <rect x="10" y="12" width="2.2" height="5" fill="#777"/><rect x="13" y="9.5" width="2.2" height="7.5" fill="#777"/><rect x="16" y="11" width="2.4" height="6" fill="#1e88d6"/></svg>
<div class="t" style="top:213.83px;font-size:14.20px;color:#262626;left:1629.60px;transform:scaleX(0.9225);transform-origin:left top;">Analyze</div>
<div class="t" style="top:231.93px;font-size:14.20px;color:#262626;left:1639.00px;transform:scaleX(0.9335);transform-origin:left top;">Data</div>
<svg class="a" style="left:1740px;top:259px;" width="11" height="7" viewBox="0 0 11 7"><path d="M0.65 0.65 L5.5 6 L10.35 0.65" fill="none" stroke="#444" stroke-width="1.3"/></svg>
<div class="a" style="left:50.00px;top:286.50px;width:113.00px;height:25.50px;background:#fff;border:1px solid #d9d6d2;border-bottom-color:#c9c5c1;border-radius:4px"></div>
<div class="t" style="top:292.86px;font-size:14.00px;color:#222;left:55.00px;transform:scaleX(1.0526);transform-origin:left top;">W29</div>
<svg class="a" style="left:145.5px;top:297.5px;" width="12" height="7" viewBox="0 0 12 7"><path d="M0.8 0.8 L6 6 L11.2 0.8" fill="none" stroke="#333" stroke-width="1.3"/></svg>
<div class="a" style="left:173.2px;top:294.5px;width:3px;height:3px;border-radius:50%;background:#333"></div>
<div class="a" style="left:173.2px;top:299.5px;width:3px;height:3px;border-radius:50%;background:#333"></div>
<div class="a" style="left:173.2px;top:304.5px;width:3px;height:3px;border-radius:50%;background:#333"></div>
<div class="a" style="left:187.00px;top:286.00px;width:94.00px;height:26.00px;background:#fff;border:1px solid #d9d6d2;border-bottom-color:#c9c5c1;border-radius:4px"></div>
<svg class="a" style="left:193px;top:293px;" width="15" height="14" viewBox="0 0 15 14"><path d="M1 0.8 L14 13.2 M14 0.8 L1 13.2" stroke="#9b9b9b" stroke-width="1.2"/></svg>
<svg class="a" style="left:218px;top:293px;" width="19" height="14" viewBox="0 0 19 14"><path d="M1 7.5 L6.5 13 L18 1" fill="none" stroke="#9b9b9b" stroke-width="1.2"/></svg>
<div class="t" style="left:246px;top:288px;font-family:'Liberation Serif',serif;font-style:italic;font-size:19px;color:#222;letter-spacing:-0.5px">fx</div>
<svg class="a" style="left:269px;top:296px;" width="10" height="6" viewBox="0 0 10 6"><path d="M0.8 0.8 L5 5 L9.2 0.8" fill="none" stroke="#777" stroke-width="1.1"/></svg>
<div class="a" style="left:287.00px;top:286.00px;width:1474.00px;height:26.00px;background:#fff;border:1px solid #d9d6d2;border-bottom-color:#c9c5c1;border-radius:4px"></div>
<svg class="a" style="left:1744.5px;top:295px;" width="13" height="8" viewBox="0 0 13 8"><path d="M0.8 0.8 L6.5 6.5 L12.2 0.8" fill="none" stroke="#333" stroke-width="1.3"/></svg>
<div class="a" style="left:40.00px;top:320.00px;width:1708.00px;height:617.00px;background:#ffffff;"></div>
<div class="a" style="left:40.00px;top:320.00px;width:1708.00px;height:16.00px;background:#f0f0f0;"></div>
<div class="a" style="left:40.00px;top:320.00px;width:23.00px;height:617.00px;background:#f0f0f0;"></div>
<svg class="a" style="left:48px;top:322px;" width="13" height="12" viewBox="0 0 13 12"><path d="M12 0.5 V11.5 H1 Z" fill="#dcdcdc"/></svg>
<div class="t" style="top:323.15px;font-size:11.50px;color:#474747;left:-326.25px;width:800px;text-align:center;">A</div>
<div class="a" style="left:84.00px;top:321.00px;width:1.00px;height:14.00px;background:#dadada;"></div>
<div class="t" style="top:323.15px;font-size:11.50px;color:#474747;left:-286.85px;width:800px;text-align:center;">B</div>
<div class="a" style="left:141.30px;top:321.00px;width:1.00px;height:14.00px;background:#dadada;"></div>
<div class="t" style="top:323.15px;font-size:11.50px;color:#474747;left:-216.60px;width:800px;text-align:center;">C</div>
<div class="a" style="left:224.50px;top:321.00px;width:1.00px;height:14.00px;background:#dadada;"></div>
<div class="t" style="top:323.15px;font-size:11.50px;color:#474747;left:-111.00px;width:800px;text-align:center;">D</div>
<div class="a" style="left:352.50px;top:321.00px;width:1.00px;height:14.00px;background:#dadada;"></div>
<div class="t" style="top:323.15px;font-size:11.50px;color:#474747;left:2.75px;width:800px;text-align:center;">E</div>
<div class="a" style="left:452.00px;top:321.00px;width:1.00px;height:14.00px;background:#dadada;"></div>
<div class="t" style="top:323.15px;font-size:11.50px;color:#474747;left:101.90px;width:800px;text-align:center;">F</div>
<div class="a" style="left:550.80px;top:321.00px;width:1.00px;height:14.00px;background:#dadada;"></div>
<div class="t" style="top:323.15px;font-size:11.50px;color:#474747;left:200.85px;width:800px;text-align:center;">G</div>
<div class="a" style="left:649.90px;top:321.00px;width:1.00px;height:14.00px;background:#dadada;"></div>
<div class="t" style="top:323.15px;font-size:11.50px;color:#474747;left:306.50px;width:800px;text-align:center;">H</div>
<div class="a" style="left:762.10px;top:321.00px;width:1.00px;height:14.00px;background:#dadada;"></div>
<div class="t" style="top:323.15px;font-size:11.50px;color:#474747;left:408.60px;width:800px;text-align:center;">I</div>
<div class="a" style="left:854.10px;top:321.00px;width:1.00px;height:14.00px;background:#dadada;"></div>
<div class="t" style="top:323.15px;font-size:11.50px;color:#474747;left:482.48px;width:800px;text-align:center;">O</div>
<div class="a" style="left:909.85px;top:321.00px;width:1.00px;height:14.00px;background:#dadada;"></div>
<div class="t" style="top:323.15px;font-size:11.50px;color:#474747;left:538.23px;width:800px;text-align:center;">P</div>
<div class="a" style="left:965.60px;top:321.00px;width:1.00px;height:14.00px;background:#dadada;"></div>
<div class="t" style="top:323.15px;font-size:11.50px;color:#474747;left:593.98px;width:800px;text-align:center;">Q</div>
<div class="a" style="left:1021.35px;top:321.00px;width:1.00px;height:14.00px;background:#dadada;"></div>
<div class="t" style="top:323.15px;font-size:11.50px;color:#474747;left:649.72px;width:800px;text-align:center;">R</div>
<div class="a" style="left:1077.10px;top:321.00px;width:1.00px;height:14.00px;background:#dadada;"></div>
<div class="t" style="top:323.15px;font-size:11.50px;color:#474747;left:705.47px;width:800px;text-align:center;">S</div>
<div class="a" style="left:1132.85px;top:321.00px;width:1.00px;height:14.00px;background:#dadada;"></div>
<div class="t" style="top:323.15px;font-size:11.50px;color:#474747;left:761.22px;width:800px;text-align:center;">T</div>
<div class="a" style="left:1188.60px;top:321.00px;width:1.00px;height:14.00px;background:#dadada;"></div>
<div class="t" style="top:323.15px;font-size:11.50px;color:#474747;left:816.97px;width:800px;text-align:center;">U</div>
<div class="a" style="left:1244.35px;top:321.00px;width:1.00px;height:14.00px;background:#dadada;"></div>
<div class="t" style="top:323.15px;font-size:11.50px;color:#474747;left:872.72px;width:800px;text-align:center;">V</div>
<div class="a" style="left:1300.10px;top:321.00px;width:1.00px;height:14.00px;background:#dadada;"></div>
<div class="a" style="left:1300.60px;top:320.00px;width:55.75px;height:16.00px;background:#d3d3d3;"></div>
<div class="a" style="left:1300.60px;top:334.00px;width:55.75px;height:2.00px;background:#107c41;"></div>
<div class="t" style="top:323.15px;font-size:11.50px;color:#107c41;left:928.47px;width:800px;text-align:center;">W</div>
<div class="a" style="left:1355.85px;top:321.00px;width:1.00px;height:14.00px;background:#dadada;"></div>
<div class="t" style="top:323.15px;font-size:11.50px;color:#474747;left:984.22px;width:800px;text-align:center;">X</div>
<div class="a" style="left:1411.60px;top:321.00px;width:1.00px;height:14.00px;background:#dadada;"></div>
<div class="t" style="top:323.15px;font-size:11.50px;color:#474747;left:1039.97px;width:800px;text-align:center;">Y</div>
<div class="a" style="left:1467.35px;top:321.00px;width:1.00px;height:14.00px;background:#dadada;"></div>
<div class="t" style="top:323.15px;font-size:11.50px;color:#474747;left:1095.72px;width:800px;text-align:center;">Z</div>
<div class="a" style="left:1523.10px;top:321.00px;width:1.00px;height:14.00px;background:#dadada;"></div>
<div class="t" style="top:323.15px;font-size:11.50px;color:#474747;left:1151.47px;width:800px;text-align:center;">AA</div>
<div class="a" style="left:1578.85px;top:321.00px;width:1.00px;height:14.00px;background:#dadada;"></div>
<div class="t" style="top:323.15px;font-size:11.50px;color:#474747;left:1207.22px;width:800px;text-align:center;">AB</div>
<div class="a" style="left:1634.60px;top:321.00px;width:1.00px;height:14.00px;background:#dadada;"></div>
<div class="t" style="top:323.15px;font-size:11.50px;color:#474747;left:1262.97px;width:800px;text-align:center;">AC</div>
<div class="a" style="left:1690.35px;top:321.00px;width:1.00px;height:14.00px;background:#dadada;"></div>
<div class="t" style="top:323.15px;font-size:11.50px;color:#474747;left:1318.72px;width:800px;text-align:center;">AD</div>
<div class="a" style="left:1746.10px;top:321.00px;width:1.00px;height:14.00px;background:#dadada;"></div>
<div class="a" style="left:852.10px;top:321.00px;width:1.00px;height:14.00px;background:#dadada;"></div>
<div class="a" style="left:63.00px;top:334.60px;width:1685.00px;height:1.60px;background:#c8c8c8;"></div>
<div class="a" style="left:40px;top:336.00px;width:23px;height:20.00px;overflow:hidden"><div class="t" style="left:0;width:24px;text-align:center;top:7.80px;font-size:11.5px;color:#444">1</div></div>
<div class="a" style="left:43.00px;top:355.50px;width:19.00px;height:1.00px;background:#dcdcdc;"></div>
<div class="a" style="left:40px;top:356.00px;width:23px;height:63.50px;overflow:hidden"><div class="t" style="left:0;width:24px;text-align:center;top:51.30px;font-size:11.5px;color:#444">2</div></div>
<div class="a" style="left:43.00px;top:419.00px;width:19.00px;height:1.00px;background:#dcdcdc;"></div>
<div class="a" style="left:40px;top:419.50px;width:23px;height:25.50px;overflow:hidden"><div class="t" style="left:0;width:24px;text-align:center;top:13.30px;font-size:11.5px;color:#444">3</div></div>
<div class="a" style="left:43.00px;top:444.50px;width:19.00px;height:1.00px;background:#dcdcdc;"></div>
<div class="a" style="left:40px;top:445.00px;width:23px;height:25.50px;overflow:hidden"><div class="t" style="left:0;width:24px;text-align:center;top:13.30px;font-size:11.5px;color:#444">4</div></div>
<div class="a" style="left:43.00px;top:470.00px;width:19.00px;height:1.00px;background:#dcdcdc;"></div>
<div class="a" style="left:40px;top:470.50px;width:23px;height:25.50px;overflow:hidden"><div class="t" style="left:0;width:24px;text-align:center;top:13.30px;font-size:11.5px;color:#444">5</div></div>
<div class="a" style="left:43.00px;top:495.50px;width:19.00px;height:1.00px;background:#dcdcdc;"></div>
<div class="a" style="left:40px;top:496.00px;width:23px;height:25.20px;overflow:hidden"><div class="t" style="left:0;width:24px;text-align:center;top:13.00px;font-size:11.5px;color:#444">6</div></div>
<div class="a" style="left:43.00px;top:520.70px;width:19.00px;height:1.00px;background:#dcdcdc;"></div>
<div class="a" style="left:40px;top:521.20px;width:23px;height:23.80px;overflow:hidden"><div class="t" style="left:0;width:24px;text-align:center;top:11.60px;font-size:11.5px;color:#444">7</div></div>
<div class="a" style="left:43.00px;top:544.50px;width:19.00px;height:1.00px;background:#dcdcdc;"></div>
<div class="a" style="left:40px;top:545.00px;width:23px;height:11.50px;overflow:hidden"><div class="t" style="left:0;width:24px;text-align:center;top:-0.70px;font-size:11.5px;color:#444">7</div></div>
<div class="a" style="left:43.00px;top:556.00px;width:19.00px;height:1.00px;background:#dcdcdc;"></div>
<div class="a" style="left:40px;top:556.50px;width:23px;height:25.00px;overflow:hidden"><div class="t" style="left:0;width:24px;text-align:center;top:12.80px;font-size:11.5px;color:#444">10</div></div>
<div class="a" style="left:43.00px;top:581.00px;width:19.00px;height:1.00px;background:#dcdcdc;"></div>
<div class="a" style="left:40px;top:581.50px;width:23px;height:25.20px;overflow:hidden"><div class="t" style="left:0;width:24px;text-align:center;top:13.00px;font-size:11.5px;color:#444">11</div></div>
<div class="a" style="left:43.00px;top:606.20px;width:19.00px;height:1.00px;background:#dcdcdc;"></div>
<div class="a" style="left:40px;top:606.70px;width:23px;height:25.30px;overflow:hidden"><div class="t" style="left:0;width:24px;text-align:center;top:13.10px;font-size:11.5px;color:#444">12</div></div>
<div class="a" style="left:43.00px;top:631.50px;width:19.00px;height:1.00px;background:#dcdcdc;"></div>
<div class="a" style="left:40px;top:632.00px;width:23px;height:25.00px;overflow:hidden"><div class="t" style="left:0;width:24px;text-align:center;top:12.80px;font-size:11.5px;color:#444">13</div></div>
<div class="a" style="left:43.00px;top:656.50px;width:19.00px;height:1.00px;background:#dcdcdc;"></div>
<div class="a" style="left:40px;top:657.00px;width:23px;height:25.00px;overflow:hidden"><div class="t" style="left:0;width:24px;text-align:center;top:12.80px;font-size:11.5px;color:#444">14</div></div>
<div class="a" style="left:43.00px;top:681.50px;width:19.00px;height:1.00px;background:#dcdcdc;"></div>
<div class="a" style="left:40px;top:682.00px;width:23px;height:25.50px;overflow:hidden"><div class="t" style="left:0;width:24px;text-align:center;top:13.30px;font-size:11.5px;color:#444">15</div></div>
<div class="a" style="left:43.00px;top:707.00px;width:19.00px;height:1.00px;background:#dcdcdc;"></div>
<div class="a" style="left:40px;top:707.50px;width:23px;height:43.50px;overflow:hidden"><div class="t" style="left:0;width:24px;text-align:center;top:31.30px;font-size:11.5px;color:#444">16</div></div>
<div class="a" style="left:43.00px;top:750.50px;width:19.00px;height:1.00px;background:#dcdcdc;"></div>
<div class="a" style="left:40px;top:751.00px;width:23px;height:20.75px;overflow:hidden"><div class="t" style="left:0;width:24px;text-align:center;top:8.55px;font-size:11.5px;color:#444">17</div></div>
<div class="a" style="left:43.00px;top:771.25px;width:19.00px;height:1.00px;background:#dcdcdc;"></div>
<div class="a" style="left:40px;top:771.75px;width:23px;height:20.75px;overflow:hidden"><div class="t" style="left:0;width:24px;text-align:center;top:8.55px;font-size:11.5px;color:#444">18</div></div>
<div class="a" style="left:43.00px;top:792.00px;width:19.00px;height:1.00px;background:#dcdcdc;"></div>
<div class="a" style="left:40px;top:792.50px;width:23px;height:20.75px;overflow:hidden"><div class="t" style="left:0;width:24px;text-align:center;top:8.55px;font-size:11.5px;color:#444">19</div></div>
<div class="a" style="left:43.00px;top:812.75px;width:19.00px;height:1.00px;background:#dcdcdc;"></div>
<div class="a" style="left:40px;top:813.25px;width:23px;height:20.75px;overflow:hidden"><div class="t" style="left:0;width:24px;text-align:center;top:8.55px;font-size:11.5px;color:#444">20</div></div>
<div class="a" style="left:43.00px;top:833.50px;width:19.00px;height:1.00px;background:#dcdcdc;"></div>
<div class="a" style="left:40px;top:834.00px;width:23px;height:20.75px;overflow:hidden"><div class="t" style="left:0;width:24px;text-align:center;top:8.55px;font-size:11.5px;color:#444">21</div></div>
<div class="a" style="left:43.00px;top:854.25px;width:19.00px;height:1.00px;background:#dcdcdc;"></div>
<div class="a" style="left:40px;top:854.75px;width:23px;height:20.75px;overflow:hidden"><div class="t" style="left:0;width:24px;text-align:center;top:8.55px;font-size:11.5px;color:#444">22</div></div>
<div class="a" style="left:43.00px;top:875.00px;width:19.00px;height:1.00px;background:#dcdcdc;"></div>
<div class="a" style="left:40px;top:875.50px;width:23px;height:20.75px;overflow:hidden"><div class="t" style="left:0;width:24px;text-align:center;top:8.55px;font-size:11.5px;color:#444">23</div></div>
<div class="a" style="left:43.00px;top:895.75px;width:19.00px;height:1.00px;background:#dcdcdc;"></div>
<div class="a" style="left:40px;top:896.25px;width:23px;height:20.75px;overflow:hidden"><div class="t" style="left:0;width:24px;text-align:center;top:8.55px;font-size:11.5px;color:#444">24</div></div>
<div class="a" style="left:43.00px;top:916.50px;width:19.00px;height:1.00px;background:#dcdcdc;"></div>
<div class="a" style="left:40px;top:917.00px;width:23px;height:20.75px;overflow:hidden"><div class="t" style="left:0;width:24px;text-align:center;top:8.55px;font-size:11.5px;color:#444">25</div></div>
<div class="a" style="left:43.00px;top:937.25px;width:19.00px;height:1.00px;background:#dcdcdc;"></div>
<div class="a" style="left:62.00px;top:336.00px;width:1.60px;height:601.00px;background:#c8c8c8;"></div>
<div class="a" style="left:62.30px;top:321.00px;width:1.00px;height:15.00px;background:#dadada;"></div>
<div class="a" style="left:63.60px;top:336.20px;width:791.00px;height:371.80px;background:#eeeaf4;"></div>
<div class="a" style="left:63.60px;top:707.00px;width:20.90px;height:230.00px;background:#eeeaf4;"></div>
<div class="a" style="left:84.00px;top:355.50px;width:678.00px;height:64.00px;background:#e6b89c;"></div>
<div class="t" style="top:373.96px;font-size:31.00px;color:#1e1e1e;left:253.20px;">Customer Loan Analysis</div>
<div class="a" style="left:84.00px;top:445.00px;width:269.00px;height:25.50px;background:#92d050;"></div>
<div class="t" style="top:451.83px;font-size:11.20px;color:#1e1e1e;left:-181.50px;width:800px;text-align:center;transform:scaleX(1.0847);transform-origin:center top;">Loan Details (Approved)</div>
<div class="a" style="left:0;top:0;width:1810px;height:1072px;clip-path:inset(0 0 0 63.6px)">
<div class="t" style="top:476.94px;font-size:12.00px;color:#575757;right:1597.80px;transform:scaleX(0.9865);transform-origin:right top;">Loan amount</div>
</div>
<div class="t" style="top:477.00px;font-size:11.50px;color:#383838;left:237.70px;transform:scaleX(0.9629);transform-origin:left top;">$51,10,44,665.00</div>
<div class="a" style="left:224.20px;top:470.50px;width:2.00px;height:25.50px;background:#d2c6e0;"></div>
<div class="a" style="left:0;top:0;width:1810px;height:1072px;clip-path:inset(0 0 0 63.6px)">
<div class="t" style="top:502.29px;font-size:12.00px;color:#575757;right:1597.80px;transform:scaleX(1.0288);transform-origin:right top;">Averge interest rate</div>
</div>
<div class="t" style="top:502.35px;font-size:11.50px;color:#383838;left:237.70px;transform:scaleX(0.8986);transform-origin:left top;">9.50%</div>
<div class="a" style="left:224.20px;top:496.00px;width:2.00px;height:25.20px;background:#d2c6e0;"></div>
<div class="a" style="left:0;top:0;width:1810px;height:1072px;clip-path:inset(0 0 0 63.6px)">
<div class="t" style="top:526.79px;font-size:12.00px;color:#575757;right:1597.80px;">Avearge Loan period in years</div>
</div>
<div class="t" style="top:526.85px;font-size:11.50px;color:#383838;left:237.70px;transform:scaleX(1.0164);transform-origin:left top;">10</div>
<div class="a" style="left:224.20px;top:521.20px;width:2.00px;height:23.80px;background:#d2c6e0;"></div>
<div class="a" style="left:84.00px;top:556.50px;width:269.00px;height:25.00px;background:#92d050;"></div>
<div class="t" style="top:563.08px;font-size:11.20px;color:#1e1e1e;left:-181.50px;width:800px;text-align:center;transform:scaleX(1.0271);transform-origin:center top;">Loan Summary</div>
<div class="a" style="left:0;top:0;width:1810px;height:1072px;clip-path:inset(0 0 0 63.6px)">
<div class="t" style="top:587.79px;font-size:12.00px;color:#575757;right:1597.80px;transform:scaleX(1.0178);transform-origin:right top;">Monthly payment</div>
</div>
<div class="t" style="top:587.85px;font-size:11.50px;color:#383838;left:237.70px;transform:scaleX(0.9737);transform-origin:left top;">$66,12,793.15</div>
<div class="a" style="left:224.20px;top:581.50px;width:2.00px;height:25.20px;background:#d2c6e0;"></div>
<div class="a" style="left:0;top:0;width:1810px;height:1072px;clip-path:inset(0 0 0 63.6px)">
<div class="t" style="top:613.04px;font-size:12.00px;color:#575757;right:1597.80px;transform:scaleX(0.9913);transform-origin:right top;">Number of payments</div>
</div>
<div class="t" style="top:613.10px;font-size:11.50px;color:#383838;left:237.70px;transform:scaleX(1.0268);transform-origin:left top;">120</div>
<div class="a" style="left:224.20px;top:606.70px;width:2.00px;height:25.30px;background:#d2c6e0;"></div>
<div class="a" style="left:0;top:0;width:1810px;height:1072px;clip-path:inset(0 0 0 63.6px)">
<div class="t" style="top:638.19px;font-size:12.00px;color:#575757;right:1597.80px;transform:scaleX(1.0143);transform-origin:right top;">Total interest</div>
</div>
<div class="t" style="top:638.25px;font-size:11.50px;color:#383838;left:237.70px;transform:scaleX(0.9651);transform-origin:left top;">$28,24,90,512.47</div>
<div class="a" style="left:224.20px;top:632.00px;width:2.00px;height:25.00px;background:#d2c6e0;"></div>
<div class="a" style="left:0;top:0;width:1810px;height:1072px;clip-path:inset(0 0 0 63.6px)">
<div class="t" style="top:663.19px;font-size:12.00px;color:#575757;right:1597.80px;transform:scaleX(1.0184);transform-origin:right top;">Total cost of loan</div>
</div>
<div class="t" style="top:663.25px;font-size:11.50px;color:#383838;left:237.70px;transform:scaleX(0.9651);transform-origin:left top;">$79,35,35,177.47</div>
<div class="a" style="left:224.20px;top:657.00px;width:2.00px;height:25.00px;background:#d2c6e0;"></div>
<div class="a" style="left:452.00px;top:445.00px;width:310.00px;height:25.50px;background:#ffc000;"></div>
<div class="t" style="top:451.83px;font-size:11.20px;color:#1e1e1e;left:207.00px;width:800px;text-align:center;transform:scaleX(1.0698);transform-origin:center top;">Loan Details (Rejected)</div>
<div class="a" style="left:0;top:0;width:1810px;height:1072px;clip-path:inset(0 0 0 63.6px)">
<div class="t" style="top:476.94px;font-size:12.00px;color:#575757;right:1172.30px;transform:scaleX(0.9865);transform-origin:right top;">Loan amount</div>
</div>
<div class="t" style="top:477.00px;font-size:11.50px;color:#383838;left:663.20px;transform:scaleX(0.9640);transform-origin:left top;">$ 12,491,942,618</div>
<div class="a" style="left:649.70px;top:470.50px;width:2.00px;height:25.50px;background:#d2c6e0;"></div>
<div class="a" style="left:0;top:0;width:1810px;height:1072px;clip-path:inset(0 0 0 63.6px)">
<div class="t" style="top:502.29px;font-size:12.00px;color:#575757;right:1172.30px;transform:scaleX(1.0288);transform-origin:right top;">Averge interest rate</div>
</div>
<div class="t" style="top:502.35px;font-size:11.50px;color:#383838;left:663.20px;transform:scaleX(0.9201);transform-origin:left top;">8.50%</div>
<div class="a" style="left:649.70px;top:496.00px;width:2.00px;height:25.20px;background:#d2c6e0;"></div>
<div class="a" style="left:0;top:0;width:1810px;height:1072px;clip-path:inset(0 0 0 63.6px)">
<div class="t" style="top:526.79px;font-size:12.00px;color:#575757;right:1172.30px;">Avearge Loan period in years</div>
</div>
<div class="t" style="top:526.85px;font-size:11.50px;color:#383838;left:663.20px;transform:scaleX(1.0164);transform-origin:left top;">19</div>
<div class="a" style="left:649.70px;top:521.20px;width:2.00px;height:23.80px;background:#d2c6e0;"></div>
<div class="a" style="left:452.00px;top:556.50px;width:310.00px;height:25.00px;background:#ffc000;"></div>
<div class="t" style="top:563.08px;font-size:11.20px;color:#1e1e1e;left:207.00px;width:800px;text-align:center;transform:scaleX(1.0271);transform-origin:center top;">Loan Summary</div>
<div class="a" style="left:0;top:0;width:1810px;height:1072px;clip-path:inset(0 0 0 63.6px)">
<div class="t" style="top:587.79px;font-size:12.00px;color:#575757;right:1172.30px;transform:scaleX(1.0178);transform-origin:right top;">Monthly payment</div>
</div>
<div class="t" style="top:587.85px;font-size:11.50px;color:#383838;left:663.20px;transform:scaleX(0.9731);transform-origin:left top;">$9,515,695</div>
<div class="a" style="left:649.70px;top:581.50px;width:2.00px;height:25.20px;background:#d2c6e0;"></div>
<div class="a" style="left:0;top:0;width:1810px;height:1072px;clip-path:inset(0 0 0 63.6px)">
<div class="t" style="top:613.04px;font-size:12.00px;color:#575757;right:1172.30px;transform:scaleX(0.9913);transform-origin:right top;">Number of payments</div>
</div>
<div class="t" style="top:613.10px;font-size:11.50px;color:#383838;left:663.20px;transform:scaleX(1.0268);transform-origin:left top;">120</div>
<div class="a" style="left:649.70px;top:606.70px;width:2.00px;height:25.30px;background:#d2c6e0;"></div>
<div class="a" style="left:0;top:0;width:1810px;height:1072px;clip-path:inset(0 0 0 63.6px)">
<div class="t" style="top:638.19px;font-size:12.00px;color:#575757;right:1172.30px;transform:scaleX(1.0143);transform-origin:right top;">Total interest</div>
</div>
<div class="t" style="top:638.25px;font-size:11.50px;color:#383838;left:663.20px;transform:scaleX(0.9548);transform-origin:left top;">$ 1,295,059</div>
<div class="a" style="left:649.70px;top:632.00px;width:2.00px;height:25.00px;background:#d2c6e0;"></div>
<div class="a" style="left:0;top:0;width:1810px;height:1072px;clip-path:inset(0 0 0 63.6px)">
<div class="t" style="top:663.19px;font-size:12.00px;color:#575757;right:1172.30px;transform:scaleX(1.0184);transform-origin:right top;">Total cost of loan</div>
</div>
<div class="t" style="top:663.25px;font-size:11.50px;color:#383838;left:663.20px;transform:scaleX(0.9514);transform-origin:left top;">$ 9,82,989,151</div>
<div class="a" style="left:649.70px;top:657.00px;width:2.00px;height:25.00px;background:#d2c6e0;"></div>
<div class="a" style="left:84.00px;top:495.00px;width:270.00px;height:2.20px;background:#d2c6e0;"></div>
<div class="a" style="left:84.00px;top:520.30px;width:270.00px;height:2.20px;background:#d2c6e0;"></div>
<div class="a" style="left:84.00px;top:545.50px;width:270.00px;height:2.20px;background:#d2c6e0;"></div>
<div class="a" style="left:84.00px;top:605.80px;width:270.00px;height:2.20px;background:#d2c6e0;"></div>
<div class="a" style="left:84.00px;top:631.00px;width:270.00px;height:2.20px;background:#d2c6e0;"></div>
<div class="a" style="left:84.00px;top:656.30px;width:270.00px;height:2.20px;background:#d2c6e0;"></div>
<div class="a" style="left:452.00px;top:495.00px;width:311.00px;height:2.20px;background:#d2c6e0;"></div>
<div class="a" style="left:452.00px;top:520.30px;width:311.00px;height:2.20px;background:#d2c6e0;"></div>
<div class="a" style="left:452.00px;top:545.50px;width:311.00px;height:2.20px;background:#d2c6e0;"></div>
<div class="a" style="left:452.00px;top:605.80px;width:311.00px;height:2.20px;background:#d2c6e0;"></div>
<div class="a" style="left:452.00px;top:631.00px;width:311.00px;height:2.20px;background:#d2c6e0;"></div>
<div class="a" style="left:452.00px;top:656.30px;width:311.00px;height:2.20px;background:#d2c6e0;"></div>
<div class="a" style="left:84.50px;top:707.50px;width:770.10px;height:43.50px;background:#e6b89c;"></div>
<div class="a" style="left:84.50px;top:751.00px;width:770.10px;height:186.00px;background:#ffffff;"></div>
<div class="a" style="left:0;top:0;width:1810px;height:1072px;clip-path:inset(707.50px 955.40px 135.00px 84.50px)">
<div class="a" style="left:0;top:0;width:1810px;height:1072px;clip-path:inset(707.50px 1668.90px 321.00px 84.50px)">
<div class="t" style="top:722.99px;font-size:12.00px;color:#2b2b2b;font-weight:700;left:87.30px;transform:scaleX(0.9552);transform-origin:left top;">Customer</div>
</div>
<div class="a" style="left:0;top:0;width:1810px;height:1072px;clip-path:inset(707.50px 1585.70px 321.00px 141.80px)">
<div class="t" style="top:722.99px;font-size:12.00px;color:#2b2b2b;font-weight:700;left:144.60px;transform:scaleX(0.9751);transform-origin:left top;">Loan ID</div>
</div>
<div class="a" style="left:0;top:0;width:1810px;height:1072px;clip-path:inset(707.50px 1457.70px 321.00px 225.00px)">
<div class="t" style="top:722.99px;font-size:12.00px;color:#2b2b2b;font-weight:700;left:227.80px;transform:scaleX(0.9887);transform-origin:left top;">Loan Amount</div>
</div>
<div class="a" style="left:0;top:0;width:1810px;height:1072px;clip-path:inset(707.50px 1358.20px 321.00px 353.00px)">
<div class="t" style="top:722.99px;font-size:12.00px;color:#2b2b2b;font-weight:700;left:355.80px;transform:scaleX(0.9466);transform-origin:left top;">Loan Status</div>
</div>
<div class="a" style="left:0;top:0;width:1810px;height:1072px;clip-path:inset(707.50px 1259.40px 321.00px 452.50px)">
<div class="t" style="top:722.99px;font-size:12.00px;color:#2b2b2b;font-weight:700;left:455.30px;transform:scaleX(0.9884);transform-origin:left top;">First Name</div>
</div>
<div class="a" style="left:0;top:0;width:1810px;height:1072px;clip-path:inset(707.50px 1160.30px 321.00px 551.30px)">
<div class="t" style="top:722.99px;font-size:12.00px;color:#2b2b2b;font-weight:700;left:554.10px;transform:scaleX(1.0051);transform-origin:left top;">Last Name</div>
</div>
<div class="a" style="left:0;top:0;width:1810px;height:1072px;clip-path:inset(707.50px 1048.10px 321.00px 650.40px)">
<div class="t" style="top:722.99px;font-size:12.00px;color:#2b2b2b;font-weight:700;left:653.20px;transform:scaleX(1.0402);transform-origin:left top;">Gender</div>
</div>
<div class="a" style="left:0;top:0;width:1810px;height:1072px;clip-path:inset(707.50px 956.10px 321.00px 762.60px)">
<div class="t" style="top:722.99px;font-size:12.00px;color:#2b2b2b;font-weight:700;left:765.40px;transform:scaleX(1.0087);transform-origin:left top;">Education</div>
</div>
<div class="a" style="left:0;top:0;width:1810px;height:1072px;clip-path:inset(751.00px 1668.90px 300.25px 84.50px)">
<div class="t" style="top:755.19px;font-size:12.00px;color:#525252;left:87.10px;transform:scaleX(0.8784);transform-origin:left top;">CUST00828</div>
</div>
<div class="a" style="left:0;top:0;width:1810px;height:1072px;clip-path:inset(751.00px 1585.70px 300.25px 141.80px)">
<div class="t" style="top:755.19px;font-size:12.00px;color:#525252;left:144.40px;transform:scaleX(0.9571);transform-origin:left top;">LOAN000002</div>
</div>
<div class="a" style="left:0;top:0;width:1810px;height:1072px;clip-path:inset(751.00px 1457.70px 300.25px 225.00px)">
<div class="t" style="top:755.25px;font-size:11.50px;color:#525252;right:1459.30px;transform:scaleX(0.9643);transform-origin:right top;">669179</div>
</div>
<div class="a" style="left:0;top:0;width:1810px;height:1072px;clip-path:inset(751.00px 1358.20px 300.25px 353.00px)">
<div class="t" style="top:755.19px;font-size:12.00px;color:#525252;left:355.60px;transform:scaleX(1.1194);transform-origin:left top;">Approved</div>
</div>
<div class="a" style="left:0;top:0;width:1810px;height:1072px;clip-path:inset(751.00px 1259.40px 300.25px 452.50px)">
<div class="t" style="top:755.19px;font-size:12.00px;color:#525252;left:455.10px;transform:scaleX(1.0469);transform-origin:left top;">James</div>
</div>
<div class="a" style="left:0;top:0;width:1810px;height:1072px;clip-path:inset(751.00px 1160.30px 300.25px 551.30px)">
<div class="t" style="top:755.19px;font-size:12.00px;color:#525252;left:553.90px;transform:scaleX(1.0237);transform-origin:left top;">Smith</div>
</div>
<div class="a" style="left:0;top:0;width:1810px;height:1072px;clip-path:inset(751.00px 1048.10px 300.25px 650.40px)">
<div class="t" style="top:755.19px;font-size:12.00px;color:#525252;left:653.00px;transform:scaleX(1.0397);transform-origin:left top;">Female</div>
</div>
<div class="a" style="left:0;top:0;width:1810px;height:1072px;clip-path:inset(751.00px 956.10px 300.25px 762.60px)">
<div class="t" style="top:755.19px;font-size:12.00px;color:#525252;left:765.20px;transform:scaleX(0.9853);transform-origin:left top;">PhD</div>
</div>
<div class="a" style="left:0;top:0;width:1810px;height:1072px;clip-path:inset(771.75px 1668.90px 279.50px 84.50px)">
<div class="t" style="top:775.94px;font-size:12.00px;color:#525252;left:87.10px;transform:scaleX(0.8784);transform-origin:left top;">CUST00484</div>
</div>
<div class="a" style="left:0;top:0;width:1810px;height:1072px;clip-path:inset(771.75px 1585.70px 279.50px 141.80px)">
<div class="t" style="top:775.94px;font-size:12.00px;color:#525252;left:144.40px;transform:scaleX(0.9571);transform-origin:left top;">LOAN000004</div>
</div>
<div class="a" style="left:0;top:0;width:1810px;height:1072px;clip-path:inset(771.75px 1457.70px 279.50px 225.00px)">
<div class="t" style="top:776.00px;font-size:11.50px;color:#525252;right:1459.30px;transform:scaleX(0.9643);transform-origin:right top;">589158</div>
</div>
<div class="a" style="left:0;top:0;width:1810px;height:1072px;clip-path:inset(771.75px 1358.20px 279.50px 353.00px)">
<div class="t" style="top:775.94px;font-size:12.00px;color:#525252;left:355.60px;transform:scaleX(1.1194);transform-origin:left top;">Approved</div>
</div>
<div class="a" style="left:0;top:0;width:1810px;height:1072px;clip-path:inset(771.75px 1259.40px 279.50px 452.50px)">
<div class="t" style="top:775.94px;font-size:12.00px;color:#525252;left:455.10px;transform:scaleX(0.9872);transform-origin:left top;">Jessica</div>
</div>
<div class="a" style="left:0;top:0;width:1810px;height:1072px;clip-path:inset(771.75px 1160.30px 279.50px 551.30px)">
<div class="t" style="top:775.94px;font-size:12.00px;color:#525252;left:553.90px;transform:scaleX(1.0151);transform-origin:left top;">Thomas</div>
</div>
<div class="a" style="left:0;top:0;width:1810px;height:1072px;clip-path:inset(771.75px 1048.10px 279.50px 650.40px)">
<div class="t" style="top:775.94px;font-size:12.00px;color:#525252;left:653.00px;transform:scaleX(1.0397);transform-origin:left top;">Female</div>
</div>
<div class="a" style="left:0;top:0;width:1810px;height:1072px;clip-path:inset(771.75px 956.10px 279.50px 762.60px)">
<div class="t" style="top:775.94px;font-size:12.00px;color:#525252;left:765.20px;transform:scaleX(0.9853);transform-origin:left top;">PhD</div>
</div>
<div class="a" style="left:0;top:0;width:1810px;height:1072px;clip-path:inset(792.50px 1668.90px 258.75px 84.50px)">
<div class="t" style="top:796.69px;font-size:12.00px;color:#525252;left:87.10px;transform:scaleX(0.8784);transform-origin:left top;">CUST00962</div>
</div>
<div class="a" style="left:0;top:0;width:1810px;height:1072px;clip-path:inset(792.50px 1585.70px 258.75px 141.80px)">
<div class="t" style="top:796.69px;font-size:12.00px;color:#525252;left:144.40px;transform:scaleX(0.9571);transform-origin:left top;">LOAN000005</div>
</div>
<div class="a" style="left:0;top:0;width:1810px;height:1072px;clip-path:inset(792.50px 1457.70px 258.75px 225.00px)">
<div class="t" style="top:796.75px;font-size:11.50px;color:#525252;right:1459.30px;transform:scaleX(0.9643);transform-origin:right top;">534571</div>
</div>
<div class="a" style="left:0;top:0;width:1810px;height:1072px;clip-path:inset(792.50px 1358.20px 258.75px 353.00px)">
<div class="t" style="top:796.69px;font-size:12.00px;color:#525252;left:355.60px;transform:scaleX(1.0684);transform-origin:left top;">Rejected</div>
</div>
<div class="a" style="left:0;top:0;width:1810px;height:1072px;clip-path:inset(792.50px 1259.40px 258.75px 452.50px)">
<div class="t" style="top:796.69px;font-size:12.00px;color:#525252;left:455.10px;transform:scaleX(1.0941);transform-origin:left top;">William</div>
</div>
<div class="a" style="left:0;top:0;width:1810px;height:1072px;clip-path:inset(792.50px 1160.30px 258.75px 551.30px)">
<div class="t" style="top:796.69px;font-size:12.00px;color:#525252;left:553.90px;transform:scaleX(1.1092);transform-origin:left top;">Garcia</div>
</div>
<div class="a" style="left:0;top:0;width:1810px;height:1072px;clip-path:inset(792.50px 1048.10px 258.75px 650.40px)">
<div class="t" style="top:796.69px;font-size:12.00px;color:#525252;left:653.00px;transform:scaleX(1.0397);transform-origin:left top;">Female</div>
</div>
<div class="a" style="left:0;top:0;width:1810px;height:1072px;clip-path:inset(792.50px 956.10px 258.75px 762.60px)">
<div class="t" style="top:796.69px;font-size:12.00px;color:#525252;left:765.20px;transform:scaleX(1.0993);transform-origin:left top;">Undergraduate</div>
</div>
<div class="a" style="left:0;top:0;width:1810px;height:1072px;clip-path:inset(813.25px 1668.90px 238.00px 84.50px)">
<div class="t" style="top:817.44px;font-size:12.00px;color:#525252;left:87.10px;transform:scaleX(0.8784);transform-origin:left top;">CUST00164</div>
</div>
<div class="a" style="left:0;top:0;width:1810px;height:1072px;clip-path:inset(813.25px 1585.70px 238.00px 141.80px)">
<div class="t" style="top:817.44px;font-size:12.00px;color:#525252;left:144.40px;transform:scaleX(0.9571);transform-origin:left top;">LOAN000006</div>
</div>
<div class="a" style="left:0;top:0;width:1810px;height:1072px;clip-path:inset(813.25px 1457.70px 238.00px 225.00px)">
<div class="t" style="top:817.50px;font-size:11.50px;color:#525252;right:1459.30px;transform:scaleX(0.9643);transform-origin:right top;">686933</div>
</div>
<div class="a" style="left:0;top:0;width:1810px;height:1072px;clip-path:inset(813.25px 1358.20px 238.00px 353.00px)">
<div class="t" style="top:817.44px;font-size:12.00px;color:#525252;left:355.60px;transform:scaleX(1.0684);transform-origin:left top;">Rejected</div>
</div>
<div class="a" style="left:0;top:0;width:1810px;height:1072px;clip-path:inset(813.25px 1259.40px 238.00px 452.50px)">
<div class="t" style="top:817.44px;font-size:12.00px;color:#525252;left:455.10px;transform:scaleX(1.0521);transform-origin:left top;">Charles</div>
</div>
<div class="a" style="left:0;top:0;width:1810px;height:1072px;clip-path:inset(813.25px 1160.30px 238.00px 551.30px)">
<div class="t" style="top:817.44px;font-size:12.00px;color:#525252;left:553.90px;transform:scaleX(1.0465);transform-origin:left top;">Davis</div>
</div>
<div class="a" style="left:0;top:0;width:1810px;height:1072px;clip-path:inset(813.25px 1048.10px 238.00px 650.40px)">
<div class="t" style="top:817.44px;font-size:12.00px;color:#525252;left:653.00px;transform:scaleX(1.0497);transform-origin:left top;">Male</div>
</div>
<div class="a" style="left:0;top:0;width:1810px;height:1072px;clip-path:inset(813.25px 956.10px 238.00px 762.60px)">
<div class="t" style="top:817.44px;font-size:12.00px;color:#525252;left:765.20px;transform:scaleX(1.0993);transform-origin:left top;">Undergraduate</div>
</div>
<div class="a" style="left:0;top:0;width:1810px;height:1072px;clip-path:inset(834.00px 1668.90px 217.25px 84.50px)">
<div class="t" style="top:838.19px;font-size:12.00px;color:#525252;left:87.10px;transform:scaleX(0.8784);transform-origin:left top;">CUST00785</div>
</div>
<div class="a" style="left:0;top:0;width:1810px;height:1072px;clip-path:inset(834.00px 1585.70px 217.25px 141.80px)">
<div class="t" style="top:838.19px;font-size:12.00px;color:#525252;left:144.40px;transform:scaleX(0.9571);transform-origin:left top;">LOAN000007</div>
</div>
<div class="a" style="left:0;top:0;width:1810px;height:1072px;clip-path:inset(834.00px 1457.70px 217.25px 225.00px)">
<div class="t" style="top:838.25px;font-size:11.50px;color:#525252;right:1459.30px;transform:scaleX(0.9643);transform-origin:right top;">866139</div>
</div>
<div class="a" style="left:0;top:0;width:1810px;height:1072px;clip-path:inset(834.00px 1358.20px 217.25px 353.00px)">
<div class="t" style="top:838.19px;font-size:12.00px;color:#525252;left:355.60px;transform:scaleX(1.1194);transform-origin:left top;">Approved</div>
</div>
<div class="a" style="left:0;top:0;width:1810px;height:1072px;clip-path:inset(834.00px 1259.40px 217.25px 452.50px)">
<div class="t" style="top:838.19px;font-size:12.00px;color:#525252;left:455.10px;transform:scaleX(0.9872);transform-origin:left top;">Jessica</div>
</div>
<div class="a" style="left:0;top:0;width:1810px;height:1072px;clip-path:inset(834.00px 1160.30px 217.25px 551.30px)">
<div class="t" style="top:838.19px;font-size:12.00px;color:#525252;left:553.90px;transform:scaleX(1.0154);transform-origin:left top;">Taylor</div>
</div>
<div class="a" style="left:0;top:0;width:1810px;height:1072px;clip-path:inset(834.00px 1048.10px 217.25px 650.40px)">
<div class="t" style="top:838.19px;font-size:12.00px;color:#525252;left:653.00px;transform:scaleX(1.0497);transform-origin:left top;">Male</div>
</div>
<div class="a" style="left:0;top:0;width:1810px;height:1072px;clip-path:inset(834.00px 956.10px 217.25px 762.60px)">
<div class="t" style="top:838.19px;font-size:12.00px;color:#525252;left:765.20px;transform:scaleX(1.0993);transform-origin:left top;">Undergraduate</div>
</div>
<div class="a" style="left:0;top:0;width:1810px;height:1072px;clip-path:inset(854.75px 1668.90px 196.50px 84.50px)">
<div class="t" style="top:858.94px;font-size:12.00px;color:#525252;left:87.10px;transform:scaleX(0.8784);transform-origin:left top;">CUST00101</div>
</div>
<div class="a" style="left:0;top:0;width:1810px;height:1072px;clip-path:inset(854.75px 1585.70px 196.50px 141.80px)">
<div class="t" style="top:858.94px;font-size:12.00px;color:#525252;left:144.40px;transform:scaleX(0.9571);transform-origin:left top;">LOAN000008</div>
</div>
<div class="a" style="left:0;top:0;width:1810px;height:1072px;clip-path:inset(854.75px 1457.70px 196.50px 225.00px)">
<div class="t" style="top:859.00px;font-size:11.50px;color:#525252;right:1459.30px;transform:scaleX(0.9643);transform-origin:right top;">425149</div>
</div>
<div class="a" style="left:0;top:0;width:1810px;height:1072px;clip-path:inset(854.75px 1358.20px 196.50px 353.00px)">
<div class="t" style="top:858.94px;font-size:12.00px;color:#525252;left:355.60px;transform:scaleX(1.0684);transform-origin:left top;">Rejected</div>
</div>
<div class="a" style="left:0;top:0;width:1810px;height:1072px;clip-path:inset(854.75px 1259.40px 196.50px 452.50px)">
<div class="t" style="top:858.94px;font-size:12.00px;color:#525252;left:455.10px;transform:scaleX(1.0469);transform-origin:left top;">James</div>
</div>
<div class="a" style="left:0;top:0;width:1810px;height:1072px;clip-path:inset(854.75px 1160.30px 196.50px 551.30px)">
<div class="t" style="top:858.94px;font-size:12.00px;color:#525252;left:553.90px;transform:scaleX(1.0584);transform-origin:left top;">Brown</div>
</div>
<div class="a" style="left:0;top:0;width:1810px;height:1072px;clip-path:inset(854.75px 1048.10px 196.50px 650.40px)">
<div class="t" style="top:858.94px;font-size:12.00px;color:#525252;left:653.00px;transform:scaleX(1.0497);transform-origin:left top;">Male</div>
</div>
<div class="a" style="left:0;top:0;width:1810px;height:1072px;clip-path:inset(854.75px 956.10px 196.50px 762.60px)">
<div class="t" style="top:858.94px;font-size:12.00px;color:#525252;left:765.20px;transform:scaleX(1.0993);transform-origin:left top;">Undergraduate</div>
</div>
<div class="a" style="left:0;top:0;width:1810px;height:1072px;clip-path:inset(875.50px 1668.90px 175.75px 84.50px)">
<div class="t" style="top:879.69px;font-size:12.00px;color:#525252;left:87.10px;transform:scaleX(0.8784);transform-origin:left top;">CUST01253</div>
</div>
<div class="a" style="left:0;top:0;width:1810px;height:1072px;clip-path:inset(875.50px 1585.70px 175.75px 141.80px)">
<div class="t" style="top:879.69px;font-size:12.00px;color:#525252;left:144.40px;transform:scaleX(0.9571);transform-origin:left top;">LOAN000009</div>
</div>
<div class="a" style="left:0;top:0;width:1810px;height:1072px;clip-path:inset(875.50px 1457.70px 175.75px 225.00px)">
<div class="t" style="top:879.75px;font-size:11.50px;color:#525252;right:1459.30px;transform:scaleX(0.9643);transform-origin:right top;">531062</div>
</div>
<div class="a" style="left:0;top:0;width:1810px;height:1072px;clip-path:inset(875.50px 1358.20px 175.75px 353.00px)">
<div class="t" style="top:879.69px;font-size:12.00px;color:#525252;left:355.60px;transform:scaleX(1.0684);transform-origin:left top;">Rejected</div>
</div>
<div class="a" style="left:0;top:0;width:1810px;height:1072px;clip-path:inset(875.50px 1259.40px 175.75px 452.50px)">
<div class="t" style="top:879.69px;font-size:12.00px;color:#525252;left:455.10px;transform:scaleX(1.0521);transform-origin:left top;">Charles</div>
</div>
<div class="a" style="left:0;top:0;width:1810px;height:1072px;clip-path:inset(875.50px 1160.30px 175.75px 551.30px)">
<div class="t" style="top:879.69px;font-size:12.00px;color:#525252;left:553.90px;transform:scaleX(1.0703);transform-origin:left top;">Moore</div>
</div>
<div class="a" style="left:0;top:0;width:1810px;height:1072px;clip-path:inset(875.50px 1048.10px 175.75px 650.40px)">
<div class="t" style="top:879.69px;font-size:12.00px;color:#525252;left:653.00px;transform:scaleX(1.0397);transform-origin:left top;">Female</div>
</div>
<div class="a" style="left:0;top:0;width:1810px;height:1072px;clip-path:inset(875.50px 956.10px 175.75px 762.60px)">
<div class="t" style="top:879.69px;font-size:12.00px;color:#525252;left:765.20px;transform:scaleX(1.0993);transform-origin:left top;">Undergraduate</div>
</div>
<div class="a" style="left:0;top:0;width:1810px;height:1072px;clip-path:inset(896.25px 1668.90px 155.00px 84.50px)">
<div class="t" style="top:900.44px;font-size:12.00px;color:#525252;left:87.10px;transform:scaleX(0.8784);transform-origin:left top;">CUST00195</div>
</div>
<div class="a" style="left:0;top:0;width:1810px;height:1072px;clip-path:inset(896.25px 1585.70px 155.00px 141.80px)">
<div class="t" style="top:900.44px;font-size:12.00px;color:#525252;left:144.40px;transform:scaleX(0.9571);transform-origin:left top;">LOAN000010</div>
</div>
<div class="a" style="left:0;top:0;width:1810px;height:1072px;clip-path:inset(896.25px 1457.70px 155.00px 225.00px)">
<div class="t" style="top:900.50px;font-size:11.50px;color:#525252;right:1459.30px;transform:scaleX(0.9643);transform-origin:right top;">204127</div>
</div>
<div class="a" style="left:0;top:0;width:1810px;height:1072px;clip-path:inset(896.25px 1358.20px 155.00px 353.00px)">
<div class="t" style="top:900.44px;font-size:12.00px;color:#525252;left:355.60px;transform:scaleX(1.0684);transform-origin:left top;">Rejected</div>
</div>
<div class="a" style="left:0;top:0;width:1810px;height:1072px;clip-path:inset(896.25px 1259.40px 155.00px 452.50px)">
<div class="t" style="top:900.44px;font-size:12.00px;color:#525252;left:455.10px;transform:scaleX(1.0883);transform-origin:left top;">Michael</div>
</div>
<div class="a" style="left:0;top:0;width:1810px;height:1072px;clip-path:inset(896.25px 1160.30px 155.00px 551.30px)">
<div class="t" style="top:900.44px;font-size:12.00px;color:#525252;left:553.90px;transform:scaleX(1.0679);transform-origin:left top;">Martin</div>
</div>
<div class="a" style="left:0;top:0;width:1810px;height:1072px;clip-path:inset(896.25px 1048.10px 155.00px 650.40px)">
<div class="t" style="top:900.44px;font-size:12.00px;color:#525252;left:653.00px;transform:scaleX(1.0497);transform-origin:left top;">Male</div>
</div>
<div class="a" style="left:0;top:0;width:1810px;height:1072px;clip-path:inset(896.25px 956.10px 155.00px 762.60px)">
<div class="t" style="top:900.44px;font-size:12.00px;color:#525252;left:765.20px;transform:scaleX(1.0993);transform-origin:left top;">Undergraduate</div>
</div>
<div class="a" style="left:0;top:0;width:1810px;height:1072px;clip-path:inset(917.00px 1668.90px 134.25px 84.50px)">
<div class="t" style="top:921.19px;font-size:12.00px;color:#525252;left:87.10px;transform:scaleX(0.8784);transform-origin:left top;">CUST00852</div>
</div>
<div class="a" style="left:0;top:0;width:1810px;height:1072px;clip-path:inset(917.00px 1585.70px 134.25px 141.80px)">
<div class="t" style="top:921.19px;font-size:12.00px;color:#525252;left:144.40px;transform:scaleX(0.9571);transform-origin:left top;">LOAN000015</div>
</div>
<div class="a" style="left:0;top:0;width:1810px;height:1072px;clip-path:inset(917.00px 1457.70px 134.25px 225.00px)">
<div class="t" style="top:921.25px;font-size:11.50px;color:#525252;right:1459.30px;transform:scaleX(0.9643);transform-origin:right top;">933443</div>
</div>
<div class="a" style="left:0;top:0;width:1810px;height:1072px;clip-path:inset(917.00px 1358.20px 134.25px 353.00px)">
<div class="t" style="top:921.19px;font-size:12.00px;color:#525252;left:355.60px;transform:scaleX(1.1194);transform-origin:left top;">Approved</div>
</div>
<div class="a" style="left:0;top:0;width:1810px;height:1072px;clip-path:inset(917.00px 1259.40px 134.25px 452.50px)">
<div class="t" style="top:921.19px;font-size:12.00px;color:#525252;left:455.10px;transform:scaleX(1.0763);transform-origin:left top;">Linda</div>
</div>
<div class="a" style="left:0;top:0;width:1810px;height:1072px;clip-path:inset(917.00px 1160.30px 134.25px 551.30px)">
<div class="t" style="top:921.19px;font-size:12.00px;color:#525252;left:553.90px;transform:scaleX(1.0703);transform-origin:left top;">Moore</div>
</div>
<div class="a" style="left:0;top:0;width:1810px;height:1072px;clip-path:inset(917.00px 1048.10px 134.25px 650.40px)">
<div class="t" style="top:921.19px;font-size:12.00px;color:#525252;left:653.00px;transform:scaleX(1.0397);transform-origin:left top;">Female</div>
</div>
<div class="a" style="left:0;top:0;width:1810px;height:1072px;clip-path:inset(917.00px 956.10px 134.25px 762.60px)">
<div class="t" style="top:921.19px;font-size:12.00px;color:#525252;left:765.20px;transform:scaleX(0.9853);transform-origin:left top;">PhD</div>
</div>
</div>
<div class="a" style="left:84.00px;top:707.00px;width:2.00px;height:230.00px;background:#3a3a3a;"></div>
<div class="a" style="left:141.00px;top:707.00px;width:2.00px;height:230.00px;background:#3a3a3a;"></div>
<div class="a" style="left:224.00px;top:707.00px;width:2.00px;height:230.00px;background:#3a3a3a;"></div>
<div class="a" style="left:352.00px;top:707.00px;width:2.00px;height:230.00px;background:#3a3a3a;"></div>
<div class="a" style="left:452.00px;top:707.00px;width:2.00px;height:230.00px;background:#3a3a3a;"></div>
<div class="a" style="left:550.00px;top:707.00px;width:2.00px;height:230.00px;background:#3a3a3a;"></div>
<div class="a" style="left:649.00px;top:707.00px;width:2.00px;height:230.00px;background:#3a3a3a;"></div>
<div class="a" style="left:762.00px;top:707.00px;width:2.00px;height:230.00px;background:#3a3a3a;"></div>
<div class="a" style="left:84.00px;top:707.00px;width:770.60px;height:2.00px;background:#3a3a3a;"></div>
<div class="a" style="left:84.00px;top:749.50px;width:770.60px;height:2.50px;background:#3a3a3a;"></div>
<div class="a" style="left:84.00px;top:770.00px;width:770.60px;height:2.00px;background:#3a3a3a;"></div>
<div class="a" style="left:84.00px;top:791.00px;width:770.60px;height:2.00px;background:#3a3a3a;"></div>
<div class="a" style="left:84.00px;top:812.00px;width:770.60px;height:2.00px;background:#3a3a3a;"></div>
<div class="a" style="left:84.00px;top:833.00px;width:770.60px;height:2.00px;background:#3a3a3a;"></div>
<div class="a" style="left:84.00px;top:853.00px;width:770.60px;height:2.00px;background:#3a3a3a;"></div>
<div class="a" style="left:84.00px;top:874.00px;width:770.60px;height:2.00px;background:#3a3a3a;"></div>
<div class="a" style="left:84.00px;top:895.00px;width:770.60px;height:2.00px;background:#3a3a3a;"></div>
<div class="a" style="left:84.00px;top:916.00px;width:770.60px;height:2.00px;background:#3a3a3a;"></div>
<div class="a" style="left:854.00px;top:336.20px;width:1.30px;height:600.80px;background:#a9a9a9;"></div>
<div class="a" style="left:1748.00px;top:320.00px;width:20.50px;height:618.00px;background:#f4f4f4;border-radius:0 0 9px 9px"></div>
<svg class="a" style="left:1754.8px;top:325.5px;" width="10" height="8" viewBox="0 0 10 8"><path d="M5 0.5 L9.5 7.5 H0.5 Z" fill="#707070" stroke="#707070" stroke-linejoin="round"/></svg>
<div class="a" style="left:1755.00px;top:339.60px;width:9.60px;height:20.80px;background:#737373;border-radius:5px"></div>
<svg class="a" style="left:1754.5px;top:926px;" width="10" height="8" viewBox="0 0 10 8"><path d="M5 7.5 L9.5 0.5 H0.5 Z" fill="#707070" stroke="#707070" stroke-linejoin="round"/></svg>
<div class="a" style="left:40.00px;top:937.00px;width:1730.00px;height:35.00px;background:linear-gradient(90deg,#efe9e3 0%,#ece8e2 60%,#e9e6e0 100%);"></div>
<svg class="a" style="left:68.5px;top:947.5px;" width="8" height="12" viewBox="0 0 8 12"><path d="M7 0.7 L1.2 6 L7 11.3" fill="none" stroke="#8a8a8a" stroke-width="1.2"/></svg>
<svg class="a" style="left:104.5px;top:947.5px;" width="8" height="12" viewBox="0 0 8 12"><path d="M1 0.7 L6.8 6 L1 11.3" fill="none" stroke="#8a8a8a" stroke-width="1.2"/></svg>
<div class="a" style="left:167.00px;top:936.00px;width:125.80px;height:32.00px;background:#ffffff;border-radius:0 0 7px 7px"></div>
<div class="t" style="top:943.42px;font-size:16.00px;color:#111;left:177.00px;transform:scaleX(0.9926);transform-origin:left top;text-shadow:0 0 0.4px #333">Loan calculator</div>
<div class="a" style="left:177.00px;top:963.30px;width:107.70px;height:2.10px;background:#107c41;border-radius:1px"></div>
<div class="a" style="left:298.00px;top:944.00px;width:1.00px;height:20.00px;background:#cfcac4;"></div>
<div class="t" style="top:945.74px;font-size:15.00px;color:#262626;left:312.40px;transform:scaleX(0.9887);transform-origin:left top;">Sheet1</div>
<div class="a" style="left:373.00px;top:944.00px;width:1.00px;height:20.00px;background:#cfcac4;"></div>
<svg class="a" style="left:420.5px;top:946.5px;" width="14" height="14" viewBox="0 0 14 14"><path d="M7 0.5 V13.5 M0.5 7 H13.5" stroke="#333" stroke-width="1.3"/></svg>
<div class="a" style="left:1080px;top:948.5px;width:3px;height:3px;border-radius:50%;background:#444"></div>
<div class="a" style="left:1080px;top:953.5px;width:3px;height:3px;border-radius:50%;background:#444"></div>
<div class="a" style="left:1080px;top:958.5px;width:3px;height:3px;border-radius:50%;background:#444"></div>
<div class="a" style="left:1100.40px;top:945.20px;width:648.60px;height:17.60px;background:#f7f6f4;border-radius:9px"></div>
<svg class="a" style="left:1105.8px;top:949px;" width="8" height="10" viewBox="0 0 8 10"><path d="M0.5 5 L7.5 0.5 V9.5 Z" fill="#6e6e6e" stroke="#6e6e6e" stroke-linejoin="round"/></svg>
<div class="a" style="left:1119.30px;top:949.40px;width:610.90px;height:9.60px;background:#6e6e6e;border-radius:5px"></div>
<svg class="a" style="left:1737.8px;top:949px;" width="8" height="10" viewBox="0 0 8 10"><path d="M7.5 5 L0.5 0.5 V9.5 Z" fill="#6e6e6e" stroke="#6e6e6e" stroke-linejoin="round"/></svg>
<div class="a" style="left:40.00px;top:972.00px;width:1730.00px;height:22.00px;background:#f3f3f3;"></div>
<div class="t" style="top:980.21px;font-size:11.00px;color:#444;left:54.00px;transform:scaleX(0.9907);transform-origin:left top;">Ready</div>
<svg class="a" style="left:107.5px;top:976px;" width="18" height="16" viewBox="0 0 18 16"><circle cx="7" cy="2.5" r="1.8" fill="none" stroke="#444" stroke-width="1.1"/><path d="M1 5.5 H13 M7 5.5 V10 L3.5 15 M7 10 L10.5 15" fill="none" stroke="#444" stroke-width="1.1"/><path d="M9.5 9.5 L16.5 15.5 M16.5 9.5 L9.5 15.5" stroke="#444" stroke-width="1.1"/></svg>
<div class="t" style="top:979.65px;font-size:11.50px;color:#262626;font-weight:700;left:128.00px;transform:scaleX(0.9898);transform-origin:left top;">Accessibility: Investigate</div>
<div class="a" style="left:1435.50px;top:973.30px;width:44.90px;height:20.20px;background:#dcdcdc;"></div>
<svg class="a" style="left:1449.5px;top:976px;" width="16" height="16" viewBox="0 0 16 16"><rect x="0.6" y="0.6" width="14.8" height="14.8" fill="none" stroke="#333" stroke-width="1.2"/><path d="M5.5 0.6 V15.4 M10.5 0.6 V15.4 M0.6 5.5 H15.4 M0.6 10.5 H15.4" stroke="#333" stroke-width="1.2"/></svg>
<svg class="a" style="left:1495px;top:976px;" width="17" height="16" viewBox="0 0 17 16"><rect x="0.6" y="0.6" width="15.8" height="14.8" rx="1" fill="none" stroke="#333" stroke-width="1.2"/><rect x="4.5" y="3.5" width="8" height="9" fill="none" stroke="#333" stroke-width="1.1"/><path d="M6 6 H11 M6 8 H11 M6 10 H11" stroke="#555" stroke-width="0.8"/></svg>
<svg class="a" style="left:1540.4px;top:976px;" width="16" height="16" viewBox="0 0 16 16"><rect x="0.6" y="0.6" width="14.8" height="14.8" fill="none" stroke="#333" stroke-width="1.2"/><path d="M5.5 0.6 V9 H10.5 V0.6" fill="none" stroke="#333" stroke-width="1.2"/></svg>
<div class="a" style="left:1577.00px;top:984.40px;width:8.40px;height:1.20px;background:#555;"></div>
<div class="a" style="left:1591.70px;top:984.50px;width:111.30px;height:1.00px;background:#8a8a8a;"></div>
<div class="a" style="left:1627.30px;top:978.80px;width:6.30px;height:12.60px;background:#555;border-radius:1px"></div>
<div class="a" style="left:1646.50px;top:981.00px;width:1.00px;height:8.00px;background:#8a8a8a;"></div>
<svg class="a" style="left:1709px;top:980.5px;" width="9" height="9" viewBox="0 0 9 9"><path d="M4.5 0 V9 M0 4.5 H9" stroke="#555" stroke-width="1.1"/></svg>
<div class="t" style="top:979.15px;font-size:11.50px;color:#444;left:1732.30px;">70%</div></body></html>
